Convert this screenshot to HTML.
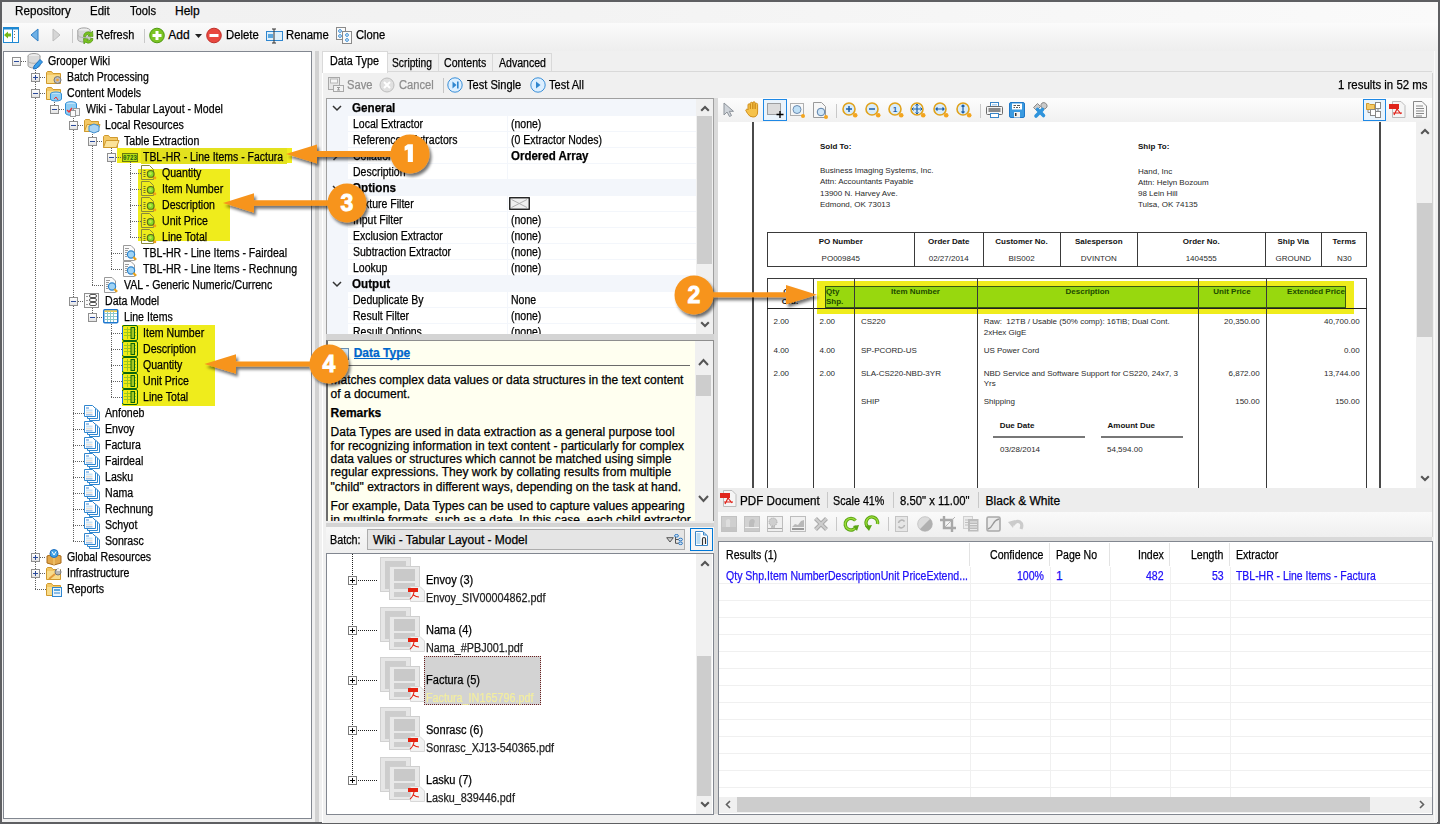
<!DOCTYPE html><html><head><meta charset="utf-8"><style>html,body{margin:0;padding:0;width:1440px;height:824px;overflow:hidden;background:#5e5f62}.a{position:absolute;margin:0;padding:0}.t{position:absolute;white-space:pre;font-family:"Liberation Sans",sans-serif;-webkit-text-stroke:0.25px currentColor}svg{overflow:visible}</style></head><body>
<svg width="0" height="0" style="position:absolute"><defs><linearGradient id="eg" x1="0" y1="0" x2="0" y2="1"><stop offset="0" stop-color="#fff"/><stop offset="1" stop-color="#e2e2e2"/></linearGradient></defs></svg>
<div class="a" style="left:0px;top:0px;width:1440px;height:824px;background:#5e5f62"></div>
<div class="a" style="left:2px;top:2px;width:1436px;height:820px;background:#f0f0f0"></div>
<div class="a" style="left:2px;top:2px;width:1436px;height:21px;background:linear-gradient(90deg,#f0f0f0 0%,#f3f3f3 40%,#fafafa 100%)"></div>
<div class="t" style="left:15.30px;top:5.00px;font-size:12px;line-height:12px;transform:scaleX(0.9728);transform-origin:0 0;color:#000;">Repository</div>
<div class="t" style="left:90.30px;top:5.00px;font-size:12px;line-height:12px;transform:scaleX(0.9527);transform-origin:0 0;color:#000;">Edit</div>
<div class="t" style="left:129.70px;top:5.00px;font-size:12px;line-height:12px;transform:scaleX(0.9317);transform-origin:0 0;color:#000;">Tools</div>
<div class="t" style="left:175.00px;top:5.00px;font-size:12px;line-height:12px;letter-spacing:-0.020px;color:#000;">Help</div>
<div class="a" style="left:2px;top:23px;width:1436px;height:28px;background:linear-gradient(180deg,#fbfbfb 0%,#f3f3f3 60%,#eeeeee 100%)"></div>
<svg class="a" style="left:3px;top:27px;" width="17" height="16" viewBox="0 0 17 16"><rect x="0.5" y="0.5" width="15" height="15" fill="#fff" stroke="#1e88d2"/><rect x="1" y="1" width="14" height="1.5" fill="#1e88d2"/><line x1="9.5" y1="1" x2="9.5" y2="15" stroke="#1e88d2"/><path d="M1 8 L5 4.5 L5 6.5 L8 6.5 L8 9.5 L5 9.5 L5 11.5Z" fill="#74b816"/><rect x="11" y="4" width="1" height="1" fill="#777"/><rect x="11" y="7" width="1" height="1" fill="#777"/><rect x="11" y="10" width="1" height="1" fill="#777"/></svg>
<svg class="a" style="left:30px;top:28px;" width="9" height="14" viewBox="0 0 9 14"><path d="M8 1 L1 7 L8 13Z" fill="#6fb1e6" stroke="#2f7ec5" stroke-width="1"/></svg>
<svg class="a" style="left:52px;top:28px;" width="9" height="14" viewBox="0 0 9 14"><path d="M1 1 L8 7 L1 13Z" fill="#d6d6d6" stroke="#bdbdbd" stroke-width="1"/></svg>
<div class="a" style="left:72px;top:29px;width:1px;height:14px;background:#c8c8c8"></div>
<svg class="a" style="left:77px;top:27px;" width="17" height="17" viewBox="0 0 17 17"><ellipse cx="7" cy="3.5" rx="6.2" ry="2.6" fill="#eeeeee" stroke="#a0a0a0"/><path d="M0.8 3.5 V12.5 A6.2 2.6 0 0 0 13.2 12.5 V3.5" fill="#d6d6d6" stroke="#a0a0a0"/><path d="M0.8 8 A6.2 2.6 0 0 0 13.2 8" fill="none" stroke="#b4b4b4"/><path d="M6.5 9.5 A4.5 4.5 0 0 1 14 6 L15.5 4 L16 9.5 L11 9 L12.5 7.5 A3 3 0 0 0 8.5 9.8Z" fill="#7ac41f" stroke="#4f9412" stroke-width="0.7"/><path d="M16 11.5 A4.5 4.5 0 0 1 8.5 15 L7 17 L6.5 11.5 L11.5 12 L10 13.5 A3 3 0 0 0 14 11.2Z" fill="#7ac41f" stroke="#4f9412" stroke-width="0.7"/></svg>
<div class="t" style="left:96.20px;top:29.00px;font-size:12px;line-height:12px;transform:scaleX(0.9091);transform-origin:0 0;color:#000;">Refresh</div>
<div class="a" style="left:144px;top:29px;width:1px;height:14px;background:#c8c8c8"></div>
<svg class="a" style="left:149px;top:27px;" width="17" height="17" viewBox="0 0 17 17"><circle cx="8" cy="8.5" r="7.3" fill="#7cc423" stroke="#4f9a12"/><path d="M6.5 4 H9.5 V7 H12.5 V10 H9.5 V13 H6.5 V10 H3.5 V7 H6.5Z" fill="#fff"/></svg>
<div class="t" style="left:168.20px;top:29.00px;font-size:12px;line-height:12px;letter-spacing:0.016px;color:#000;">Add</div>
<svg class="a" style="left:195px;top:34px;" width="7" height="4" viewBox="0 0 7 4"><path d="M0 0 H7 L3.5 4Z" fill="#222"/></svg>
<svg class="a" style="left:206px;top:27px;" width="17" height="17" viewBox="0 0 17 17"><circle cx="8" cy="8.5" r="7.3" fill="#e8483f" stroke="#c0302a"/><rect x="3.5" y="7" width="9" height="3" fill="#fff"/></svg>
<div class="t" style="left:226.20px;top:29.00px;font-size:12px;line-height:12px;transform:scaleX(0.9427);transform-origin:0 0;color:#000;">Delete</div>
<svg class="a" style="left:266px;top:28px;" width="18" height="15" viewBox="0 0 18 15"><rect x="0.5" y="3.5" width="16" height="9" fill="#dff0fb" stroke="#2f86cf"/><rect x="2" y="6" width="5" height="4" fill="#5aa7e0"/><path d="M8 1 V15 M6 1 H10 M6 15 H10" stroke="#333" stroke-width="1"/></svg>
<div class="t" style="left:286.20px;top:29.00px;font-size:12px;line-height:12px;transform:scaleX(0.9414);transform-origin:0 0;color:#000;">Rename</div>
<svg class="a" style="left:336px;top:27px;" width="17" height="17" viewBox="0 0 17 17"><rect x="0.5" y="0.5" width="9" height="12" fill="#fafafa" stroke="#8a8a8a"/><rect x="6.5" y="4.5" width="9" height="12" fill="#fafafa" stroke="#8a8a8a"/><circle cx="4" cy="4" r="1.4" fill="none" stroke="#3a8fd8"/><circle cx="4" cy="9" r="1.4" fill="none" stroke="#3a8fd8"/><circle cx="11" cy="8" r="1.4" fill="none" stroke="#3a8fd8"/><circle cx="11" cy="13" r="1.4" fill="none" stroke="#3a8fd8"/></svg>
<div class="t" style="left:356.20px;top:29.00px;font-size:12px;line-height:12px;transform:scaleX(0.9313);transform-origin:0 0;color:#000;">Clone</div>
<div class="a" style="left:3px;top:51px;width:309px;height:768px;background:#fff;border:1px solid #828790;box-sizing:border-box"></div>
<div class="a" style="left:117px;top:148px;width:175px;height:15px;background:#efec1c"></div>
<div class="a" style="left:141px;top:148px;width:146px;height:16px;background:#e3e11e"></div>
<div class="a" style="left:138px;top:169px;width:92px;height:72px;background:#efec1c"></div>
<div class="a" style="left:122px;top:325px;width:93px;height:81px;background:#efec1c"></div>
<div class="a" style="left:35px;top:66px;width:1px;height:523px;background:repeating-linear-gradient(180deg,#606060 0 1px,transparent 1px 2px)"></div>
<div class="a" style="left:54px;top:98px;width:1px;height:11px;background:repeating-linear-gradient(180deg,#606060 0 1px,transparent 1px 2px)"></div>
<div class="a" style="left:73px;top:114px;width:1px;height:427px;background:repeating-linear-gradient(180deg,#606060 0 1px,transparent 1px 2px)"></div>
<div class="a" style="left:92px;top:130px;width:1px;height:155px;background:repeating-linear-gradient(180deg,#606060 0 1px,transparent 1px 2px)"></div>
<div class="a" style="left:111px;top:146px;width:1px;height:123px;background:repeating-linear-gradient(180deg,#606060 0 1px,transparent 1px 2px)"></div>
<div class="a" style="left:130px;top:162px;width:1px;height:75px;background:repeating-linear-gradient(180deg,#606060 0 1px,transparent 1px 2px)"></div>
<div class="a" style="left:92px;top:306px;width:1px;height:11px;background:repeating-linear-gradient(180deg,#606060 0 1px,transparent 1px 2px)"></div>
<div class="a" style="left:111px;top:322px;width:1px;height:75px;background:repeating-linear-gradient(180deg,#606060 0 1px,transparent 1px 2px)"></div>
<div class="a" style="left:21px;top:61px;width:6px;height:1px;background:repeating-linear-gradient(90deg,#606060 0 1px,transparent 1px 2px)"></div>
<svg class="a" style="left:12px;top:57px;" width="9" height="9" viewBox="0 0 9 9"><rect x="0.5" y="0.5" width="8" height="8" fill="url(#eg)" stroke="#8f8f8f"/><path d="M2 4.5 H7" stroke="#2a4a9a"/></svg>
<svg class="a" style="left:27px;top:53px;" width="16" height="16" viewBox="0 0 16 16"><ellipse cx="7" cy="3" rx="6" ry="2.5" fill="#ececec" stroke="#9c9c9c"/><path d="M1 3 V12.5 A6 2.5 0 0 0 13 12.5 V3" fill="#dadada" stroke="#9c9c9c"/><path d="M1 7.8 A6 2.5 0 0 0 13 7.8" fill="none" stroke="#b0b0b0"/><path d="M7 13 L13 6.5 L15.5 9 L9.5 15.5 L6.5 16Z" fill="#3aa0ea" stroke="#1f6fc0"/></svg>
<div class="t" style="left:47.50px;top:55.00px;font-size:12px;line-height:12px;transform:scaleX(0.8855);transform-origin:0 0;color:#000;">Grooper Wiki</div>
<div class="a" style="left:40px;top:77px;width:6px;height:1px;background:repeating-linear-gradient(90deg,#606060 0 1px,transparent 1px 2px)"></div>
<svg class="a" style="left:31px;top:73px;" width="9" height="9" viewBox="0 0 9 9"><rect x="0.5" y="0.5" width="8" height="8" fill="url(#eg)" stroke="#8f8f8f"/><path d="M2 4.5 H7" stroke="#2a4a9a"/><path d="M4.5 2 V7" stroke="#2a4a9a"/></svg>
<svg class="a" style="left:46px;top:69px;" width="16" height="16" viewBox="0 0 16 16"><path d="M0.5 3.5 V14.5 H14.5 V4.5 H7 L5.5 2.5 H1.5Z" fill="#f3c865" stroke="#d09a2e"/><rect x="1" y="6" width="13" height="8" fill="#f9dc8a"/><circle cx="11.5" cy="11" r="3.5" fill="#bdbdbd" stroke="#777"/><circle cx="11.5" cy="11" r="1.3" fill="#f5a030"/></svg>
<div class="t" style="left:66.50px;top:71.00px;font-size:12px;line-height:12px;transform:scaleX(0.8752);transform-origin:0 0;color:#000;">Batch Processing</div>
<div class="a" style="left:40px;top:93px;width:6px;height:1px;background:repeating-linear-gradient(90deg,#606060 0 1px,transparent 1px 2px)"></div>
<svg class="a" style="left:31px;top:89px;" width="9" height="9" viewBox="0 0 9 9"><rect x="0.5" y="0.5" width="8" height="8" fill="url(#eg)" stroke="#8f8f8f"/><path d="M2 4.5 H7" stroke="#2a4a9a"/></svg>
<svg class="a" style="left:46px;top:85px;" width="16" height="16" viewBox="0 0 16 16"><path d="M0.5 3.5 V14.5 H14.5 V4.5 H7 L5.5 2.5 H1.5Z" fill="#f3c865" stroke="#d09a2e"/><rect x="1" y="6" width="13" height="8" fill="#f9dc8a"/><ellipse cx="10" cy="9" rx="5.5" ry="2" fill="#bfe3fa" stroke="#2f8fd8"/><path d="M4.5 9 V14 A5.5 2 0 0 0 15.5 14 V9" fill="#8fcdf3" stroke="#2f8fd8"/><path d="M8 14 L10 12 L12 15" stroke="#e33" fill="none"/></svg>
<div class="t" style="left:66.50px;top:87.00px;font-size:12px;line-height:12px;transform:scaleX(0.8820);transform-origin:0 0;color:#000;">Content Models</div>
<div class="a" style="left:59px;top:109px;width:6px;height:1px;background:repeating-linear-gradient(90deg,#606060 0 1px,transparent 1px 2px)"></div>
<svg class="a" style="left:50px;top:105px;" width="9" height="9" viewBox="0 0 9 9"><rect x="0.5" y="0.5" width="8" height="8" fill="url(#eg)" stroke="#8f8f8f"/><path d="M2 4.5 H7" stroke="#2a4a9a"/></svg>
<svg class="a" style="left:65px;top:101px;" width="16" height="16" viewBox="0 0 16 16"><ellipse cx="6" cy="3" rx="5.5" ry="2.3" fill="#bfe3fa" stroke="#2f8fd8"/><path d="M0.5 3 V12 A5.5 2.3 0 0 0 11.5 12 V3" fill="#8fcdf3" stroke="#2f8fd8"/><rect x="8.5" y="7.5" width="6" height="7" fill="#f4f4f4" stroke="#9a9a9a"/><rect x="5.5" y="9.5" width="5" height="6" fill="#fafafa" stroke="#9a9a9a"/><path d="M2 9 L4 11 L7 7" stroke="#e33" stroke-width="1.3" fill="none"/></svg>
<div class="t" style="left:85.50px;top:103.00px;font-size:12px;line-height:12px;transform:scaleX(0.8820);transform-origin:0 0;color:#000;">Wiki - Tabular Layout - Model</div>
<div class="a" style="left:78px;top:125px;width:6px;height:1px;background:repeating-linear-gradient(90deg,#606060 0 1px,transparent 1px 2px)"></div>
<svg class="a" style="left:69px;top:121px;" width="9" height="9" viewBox="0 0 9 9"><rect x="0.5" y="0.5" width="8" height="8" fill="url(#eg)" stroke="#8f8f8f"/><path d="M2 4.5 H7" stroke="#2a4a9a"/></svg>
<svg class="a" style="left:84px;top:117px;" width="16" height="16" viewBox="0 0 16 16"><path d="M0.5 3.5 V14.5 H14.5 V4.5 H7 L5.5 2.5 H1.5Z" fill="#f3c865" stroke="#d09a2e"/><path d="M0.5 14.5 L3 7.5 H16 L13.5 14.5Z" fill="#fbe29a" stroke="#d09a2e"/><path d="M10 7 L15 9 V14 L10 16 L5 14 V9Z" fill="#a9d4f4" stroke="#3f8fd0"/></svg>
<div class="t" style="left:104.50px;top:119.00px;font-size:12px;line-height:12px;transform:scaleX(0.8820);transform-origin:0 0;color:#000;">Local Resources</div>
<div class="a" style="left:97px;top:141px;width:6px;height:1px;background:repeating-linear-gradient(90deg,#606060 0 1px,transparent 1px 2px)"></div>
<svg class="a" style="left:88px;top:137px;" width="9" height="9" viewBox="0 0 9 9"><rect x="0.5" y="0.5" width="8" height="8" fill="url(#eg)" stroke="#8f8f8f"/><path d="M2 4.5 H7" stroke="#2a4a9a"/></svg>
<svg class="a" style="left:103px;top:133px;" width="16" height="16" viewBox="0 0 16 16"><path d="M0.5 3.5 V14.5 H14.5 V4.5 H7 L5.5 2.5 H1.5Z" fill="#f3c865" stroke="#d09a2e"/><path d="M0.5 14.5 L3 7.5 H16 L13.5 14.5Z" fill="#fbe29a" stroke="#d09a2e"/></svg>
<div class="t" style="left:123.50px;top:135.00px;font-size:12px;line-height:12px;transform:scaleX(0.8820);transform-origin:0 0;color:#000;">Table Extraction</div>
<div class="a" style="left:116px;top:157px;width:6px;height:1px;background:repeating-linear-gradient(90deg,#606060 0 1px,transparent 1px 2px)"></div>
<svg class="a" style="left:107px;top:153px;" width="9" height="9" viewBox="0 0 9 9"><rect x="0.5" y="0.5" width="8" height="8" fill="url(#eg)" stroke="#8f8f8f"/><path d="M2 4.5 H7" stroke="#2a4a9a"/></svg>
<svg class="a" style="left:122px;top:149px;" width="16" height="16" viewBox="0 0 16 16"><rect x="0.5" y="4.5" width="15" height="8" fill="#b6de12" stroke="#6b7a10"/><text x="8" y="11" font-size="6.5" font-family="Liberation Mono" font-weight="bold" fill="#1f5a10" text-anchor="middle" textLength="14" lengthAdjust="spacingAndGlyphs">0723</text></svg>
<div class="t" style="left:142.50px;top:151.00px;font-size:12px;line-height:12px;transform:scaleX(0.8711);transform-origin:0 0;color:#000;">TBL-HR - Line Items - Factura</div>
<div class="a" style="left:130px;top:173px;width:11px;height:1px;background:repeating-linear-gradient(90deg,#606060 0 1px,transparent 1px 2px)"></div>
<svg class="a" style="left:136px;top:165px;" width="21" height="16" viewBox="0 0 21 16"><path d="M5.5 0.5 H13.5 L17.5 4.5 V14.5 H5.5Z" fill="none" stroke="#8a8a3a"/><path d="M7.5 5.5 H9.5 M7.5 7.5 H9.5 M7.5 9.5 H9.5 M7.5 11.5 H9.5" stroke="#6b6b30"/><circle cx="14.7" cy="8.9" r="3.4" fill="#86dd2a" stroke="#5c6a12" stroke-width="1.1"/><circle cx="14.4" cy="8.6" r="1.3" fill="#c8e84a"/><circle cx="18.8" cy="12.8" r="1.5" fill="#f0a21a"/></svg>
<div class="t" style="left:161.50px;top:167.00px;font-size:12px;line-height:12px;transform:scaleX(0.8820);transform-origin:0 0;color:#000;">Quantity</div>
<div class="a" style="left:130px;top:189px;width:11px;height:1px;background:repeating-linear-gradient(90deg,#606060 0 1px,transparent 1px 2px)"></div>
<svg class="a" style="left:136px;top:181px;" width="21" height="16" viewBox="0 0 21 16"><path d="M5.5 0.5 H13.5 L17.5 4.5 V14.5 H5.5Z" fill="none" stroke="#8a8a3a"/><path d="M7.5 5.5 H9.5 M7.5 7.5 H9.5 M7.5 9.5 H9.5 M7.5 11.5 H9.5" stroke="#6b6b30"/><circle cx="14.7" cy="8.9" r="3.4" fill="#86dd2a" stroke="#5c6a12" stroke-width="1.1"/><circle cx="14.4" cy="8.6" r="1.3" fill="#c8e84a"/><circle cx="18.8" cy="12.8" r="1.5" fill="#f0a21a"/></svg>
<div class="t" style="left:161.50px;top:183.00px;font-size:12px;line-height:12px;transform:scaleX(0.8820);transform-origin:0 0;color:#000;">Item Number</div>
<div class="a" style="left:130px;top:205px;width:11px;height:1px;background:repeating-linear-gradient(90deg,#606060 0 1px,transparent 1px 2px)"></div>
<svg class="a" style="left:136px;top:197px;" width="21" height="16" viewBox="0 0 21 16"><path d="M5.5 0.5 H13.5 L17.5 4.5 V14.5 H5.5Z" fill="none" stroke="#8a8a3a"/><path d="M7.5 5.5 H9.5 M7.5 7.5 H9.5 M7.5 9.5 H9.5 M7.5 11.5 H9.5" stroke="#6b6b30"/><circle cx="14.7" cy="8.9" r="3.4" fill="#86dd2a" stroke="#5c6a12" stroke-width="1.1"/><circle cx="14.4" cy="8.6" r="1.3" fill="#c8e84a"/><circle cx="18.8" cy="12.8" r="1.5" fill="#f0a21a"/></svg>
<div class="t" style="left:161.50px;top:199.00px;font-size:12px;line-height:12px;transform:scaleX(0.8820);transform-origin:0 0;color:#000;">Description</div>
<div class="a" style="left:130px;top:221px;width:11px;height:1px;background:repeating-linear-gradient(90deg,#606060 0 1px,transparent 1px 2px)"></div>
<svg class="a" style="left:136px;top:213px;" width="21" height="16" viewBox="0 0 21 16"><path d="M5.5 0.5 H13.5 L17.5 4.5 V14.5 H5.5Z" fill="none" stroke="#8a8a3a"/><path d="M7.5 5.5 H9.5 M7.5 7.5 H9.5 M7.5 9.5 H9.5 M7.5 11.5 H9.5" stroke="#6b6b30"/><circle cx="14.7" cy="8.9" r="3.4" fill="#86dd2a" stroke="#5c6a12" stroke-width="1.1"/><circle cx="14.4" cy="8.6" r="1.3" fill="#c8e84a"/><circle cx="18.8" cy="12.8" r="1.5" fill="#f0a21a"/></svg>
<div class="t" style="left:161.50px;top:215.00px;font-size:12px;line-height:12px;transform:scaleX(0.8820);transform-origin:0 0;color:#000;">Unit Price</div>
<div class="a" style="left:130px;top:237px;width:11px;height:1px;background:repeating-linear-gradient(90deg,#606060 0 1px,transparent 1px 2px)"></div>
<svg class="a" style="left:136px;top:229px;" width="21" height="16" viewBox="0 0 21 16"><path d="M5.5 0.5 H13.5 L17.5 4.5 V14.5 H5.5Z" fill="none" stroke="#8a8a3a"/><path d="M7.5 5.5 H9.5 M7.5 7.5 H9.5 M7.5 9.5 H9.5 M7.5 11.5 H9.5" stroke="#6b6b30"/><circle cx="14.7" cy="8.9" r="3.4" fill="#86dd2a" stroke="#5c6a12" stroke-width="1.1"/><circle cx="14.4" cy="8.6" r="1.3" fill="#c8e84a"/><circle cx="18.8" cy="12.8" r="1.5" fill="#f0a21a"/></svg>
<div class="t" style="left:161.50px;top:231.00px;font-size:12px;line-height:12px;transform:scaleX(0.8820);transform-origin:0 0;color:#000;">Line Total</div>
<div class="a" style="left:111px;top:253px;width:11px;height:1px;background:repeating-linear-gradient(90deg,#606060 0 1px,transparent 1px 2px)"></div>
<svg class="a" style="left:122px;top:245px;" width="16" height="16" viewBox="0 0 16 16"><path d="M1.5 0.5 H9 L12.5 4 V15.5 H1.5Z" fill="#fbfbfb" stroke="#9a9a9a"/><path d="M3 3.5 H7 M3 5.5 H6 M3 7.5 H5 M3 9.5 H5 M3 11.5 H5" stroke="#9a9a9a"/><circle cx="9" cy="9.5" r="3.6" fill="#9fd3f5" stroke="#2f86cf" stroke-width="1.2"/><path d="M11.3 12 L14.2 14.8" stroke="#e8a21c" stroke-width="2.2"/></svg>
<div class="t" style="left:142.50px;top:247.00px;font-size:12px;line-height:12px;transform:scaleX(0.8820);transform-origin:0 0;color:#000;">TBL-HR - Line Items - Fairdeal</div>
<div class="a" style="left:111px;top:269px;width:11px;height:1px;background:repeating-linear-gradient(90deg,#606060 0 1px,transparent 1px 2px)"></div>
<svg class="a" style="left:122px;top:261px;" width="16" height="16" viewBox="0 0 16 16"><path d="M1.5 0.5 H9 L12.5 4 V15.5 H1.5Z" fill="#fbfbfb" stroke="#9a9a9a"/><path d="M3 3.5 H7 M3 5.5 H6 M3 7.5 H5 M3 9.5 H5 M3 11.5 H5" stroke="#9a9a9a"/><circle cx="9" cy="9.5" r="3.6" fill="#9fd3f5" stroke="#2f86cf" stroke-width="1.2"/><path d="M11.3 12 L14.2 14.8" stroke="#e8a21c" stroke-width="2.2"/></svg>
<div class="t" style="left:142.50px;top:263.00px;font-size:12px;line-height:12px;transform:scaleX(0.8820);transform-origin:0 0;color:#000;">TBL-HR - Line Items - Rechnung</div>
<div class="a" style="left:92px;top:285px;width:11px;height:1px;background:repeating-linear-gradient(90deg,#606060 0 1px,transparent 1px 2px)"></div>
<svg class="a" style="left:103px;top:277px;" width="16" height="16" viewBox="0 0 16 16"><path d="M1.5 0.5 H9 L12.5 4 V15.5 H1.5Z" fill="#fbfbfb" stroke="#9a9a9a"/><path d="M3 3.5 H7 M3 5.5 H6 M3 7.5 H5 M3 9.5 H5 M3 11.5 H5" stroke="#9a9a9a"/><circle cx="9" cy="9.5" r="3.6" fill="#9fd3f5" stroke="#2f86cf" stroke-width="1.2"/><path d="M11.3 12 L14.2 14.8" stroke="#e8a21c" stroke-width="2.2"/></svg>
<div class="t" style="left:123.50px;top:279.00px;font-size:12px;line-height:12px;transform:scaleX(0.8820);transform-origin:0 0;color:#000;">VAL - Generic Numeric/Currenc</div>
<div class="a" style="left:78px;top:301px;width:6px;height:1px;background:repeating-linear-gradient(90deg,#606060 0 1px,transparent 1px 2px)"></div>
<svg class="a" style="left:69px;top:297px;" width="9" height="9" viewBox="0 0 9 9"><rect x="0.5" y="0.5" width="8" height="8" fill="url(#eg)" stroke="#8f8f8f"/><path d="M2 4.5 H7" stroke="#2a4a9a"/></svg>
<svg class="a" style="left:84px;top:293px;" width="16" height="16" viewBox="0 0 16 16"><rect x="0.5" y="0.5" width="14" height="14" fill="#fafafa" stroke="#8e8e8e"/><path d="M2 3.5 H4 M2 7.5 H4 M2 11.5 H4" stroke="#9a9a9a"/><rect x="5.5" y="1.5" width="7" height="3" rx="1.5" fill="#fff" stroke="#555"/><rect x="5.5" y="5.5" width="7" height="3" rx="1.5" fill="#fff" stroke="#555"/><rect x="5.5" y="9.5" width="7" height="3" rx="1.5" fill="#fff" stroke="#555"/></svg>
<div class="t" style="left:104.50px;top:295.00px;font-size:12px;line-height:12px;transform:scaleX(0.8820);transform-origin:0 0;color:#000;">Data Model</div>
<div class="a" style="left:97px;top:317px;width:6px;height:1px;background:repeating-linear-gradient(90deg,#606060 0 1px,transparent 1px 2px)"></div>
<svg class="a" style="left:88px;top:313px;" width="9" height="9" viewBox="0 0 9 9"><rect x="0.5" y="0.5" width="8" height="8" fill="url(#eg)" stroke="#8f8f8f"/><path d="M2 4.5 H7" stroke="#2a4a9a"/></svg>
<svg class="a" style="left:103px;top:309px;" width="16" height="16" viewBox="0 0 16 16"><rect x="0.75" y="0.75" width="14" height="13" rx="1" fill="#fff" stroke="#1f78d0" stroke-width="1.5"/><rect x="1.5" y="1.5" width="12.5" height="1.3" fill="#f3c21a"/><path d="M1.5 4.5 H14 M1.5 7.5 H14 M1.5 10.5 H14 M4.5 2.5 V13 M7.5 2.5 V13 M10.5 2.5 V13" stroke="#8cc7c9"/></svg>
<div class="t" style="left:123.50px;top:311.00px;font-size:12px;line-height:12px;transform:scaleX(0.8820);transform-origin:0 0;color:#000;">Line Items</div>
<div class="a" style="left:111px;top:333px;width:11px;height:1px;background:repeating-linear-gradient(90deg,#606060 0 1px,transparent 1px 2px)"></div>
<svg class="a" style="left:122px;top:325px;" width="16" height="16" viewBox="0 0 16 16"><rect x="0.5" y="0.5" width="15" height="15" rx="1.5" fill="#f0ec14" stroke="#0b650b"/><path d="M0.5 2 V14" stroke="#1a6fd8"/><path d="M2 4.5 H14 M2 7.5 H14 M2 10.5 H14 M5.5 2 V14" stroke="#9cc81c"/><rect x="9" y="2.5" width="3.5" height="11" fill="#a9c81e" stroke="#0b650b"/></svg>
<div class="t" style="left:142.50px;top:327.00px;font-size:12px;line-height:12px;transform:scaleX(0.8820);transform-origin:0 0;color:#000;">Item Number</div>
<div class="a" style="left:111px;top:349px;width:11px;height:1px;background:repeating-linear-gradient(90deg,#606060 0 1px,transparent 1px 2px)"></div>
<svg class="a" style="left:122px;top:341px;" width="16" height="16" viewBox="0 0 16 16"><rect x="0.5" y="0.5" width="15" height="15" rx="1.5" fill="#f0ec14" stroke="#0b650b"/><path d="M0.5 2 V14" stroke="#1a6fd8"/><path d="M2 4.5 H14 M2 7.5 H14 M2 10.5 H14 M5.5 2 V14" stroke="#9cc81c"/><rect x="9" y="2.5" width="3.5" height="11" fill="#a9c81e" stroke="#0b650b"/></svg>
<div class="t" style="left:142.50px;top:343.00px;font-size:12px;line-height:12px;transform:scaleX(0.8820);transform-origin:0 0;color:#000;">Description</div>
<div class="a" style="left:111px;top:365px;width:11px;height:1px;background:repeating-linear-gradient(90deg,#606060 0 1px,transparent 1px 2px)"></div>
<svg class="a" style="left:122px;top:357px;" width="16" height="16" viewBox="0 0 16 16"><rect x="0.5" y="0.5" width="15" height="15" rx="1.5" fill="#f0ec14" stroke="#0b650b"/><path d="M0.5 2 V14" stroke="#1a6fd8"/><path d="M2 4.5 H14 M2 7.5 H14 M2 10.5 H14 M5.5 2 V14" stroke="#9cc81c"/><rect x="9" y="2.5" width="3.5" height="11" fill="#a9c81e" stroke="#0b650b"/></svg>
<div class="t" style="left:142.50px;top:359.00px;font-size:12px;line-height:12px;transform:scaleX(0.8820);transform-origin:0 0;color:#000;">Quantity</div>
<div class="a" style="left:111px;top:381px;width:11px;height:1px;background:repeating-linear-gradient(90deg,#606060 0 1px,transparent 1px 2px)"></div>
<svg class="a" style="left:122px;top:373px;" width="16" height="16" viewBox="0 0 16 16"><rect x="0.5" y="0.5" width="15" height="15" rx="1.5" fill="#f0ec14" stroke="#0b650b"/><path d="M0.5 2 V14" stroke="#1a6fd8"/><path d="M2 4.5 H14 M2 7.5 H14 M2 10.5 H14 M5.5 2 V14" stroke="#9cc81c"/><rect x="9" y="2.5" width="3.5" height="11" fill="#a9c81e" stroke="#0b650b"/></svg>
<div class="t" style="left:142.50px;top:375.00px;font-size:12px;line-height:12px;transform:scaleX(0.8820);transform-origin:0 0;color:#000;">Unit Price</div>
<div class="a" style="left:111px;top:397px;width:11px;height:1px;background:repeating-linear-gradient(90deg,#606060 0 1px,transparent 1px 2px)"></div>
<svg class="a" style="left:122px;top:389px;" width="16" height="16" viewBox="0 0 16 16"><rect x="0.5" y="0.5" width="15" height="15" rx="1.5" fill="#f0ec14" stroke="#0b650b"/><path d="M0.5 2 V14" stroke="#1a6fd8"/><path d="M2 4.5 H14 M2 7.5 H14 M2 10.5 H14 M5.5 2 V14" stroke="#9cc81c"/><rect x="9" y="2.5" width="3.5" height="11" fill="#a9c81e" stroke="#0b650b"/></svg>
<div class="t" style="left:142.50px;top:391.00px;font-size:12px;line-height:12px;transform:scaleX(0.8820);transform-origin:0 0;color:#000;">Line Total</div>
<div class="a" style="left:73px;top:413px;width:11px;height:1px;background:repeating-linear-gradient(90deg,#606060 0 1px,transparent 1px 2px)"></div>
<svg class="a" style="left:84px;top:405px;" width="16" height="16" viewBox="0 0 16 16"><path d="M5.5 4.5 H13 L15.5 7 V15.5 H5.5Z" fill="#fff" stroke="#2f86cf"/><path d="M3.5 2.5 H11 L13.5 5 V13.5 H3.5Z" fill="#fff" stroke="#2f86cf"/><path d="M0.5 0.5 H8.5 L11.5 3.5 V11.5 H0.5Z" fill="#fff" stroke="#2f86cf"/><rect x="2" y="2" width="3" height="2" fill="#9fc3ea"/><rect x="2" y="4.5" width="6.5" height="2" fill="#c7e3f7"/><rect x="2" y="7" width="6.5" height="1.5" fill="#e6e0d8"/><rect x="2" y="9" width="6.5" height="1.5" fill="#9fc3ea"/></svg>
<div class="t" style="left:104.50px;top:407.00px;font-size:12px;line-height:12px;transform:scaleX(0.8820);transform-origin:0 0;color:#000;">Anfoneb</div>
<div class="a" style="left:73px;top:429px;width:11px;height:1px;background:repeating-linear-gradient(90deg,#606060 0 1px,transparent 1px 2px)"></div>
<svg class="a" style="left:84px;top:421px;" width="16" height="16" viewBox="0 0 16 16"><path d="M5.5 4.5 H13 L15.5 7 V15.5 H5.5Z" fill="#fff" stroke="#2f86cf"/><path d="M3.5 2.5 H11 L13.5 5 V13.5 H3.5Z" fill="#fff" stroke="#2f86cf"/><path d="M0.5 0.5 H8.5 L11.5 3.5 V11.5 H0.5Z" fill="#fff" stroke="#2f86cf"/><rect x="2" y="2" width="3" height="2" fill="#9fc3ea"/><rect x="2" y="4.5" width="6.5" height="2" fill="#c7e3f7"/><rect x="2" y="7" width="6.5" height="1.5" fill="#e6e0d8"/><rect x="2" y="9" width="6.5" height="1.5" fill="#9fc3ea"/></svg>
<div class="t" style="left:104.50px;top:423.00px;font-size:12px;line-height:12px;transform:scaleX(0.8820);transform-origin:0 0;color:#000;">Envoy</div>
<div class="a" style="left:73px;top:445px;width:11px;height:1px;background:repeating-linear-gradient(90deg,#606060 0 1px,transparent 1px 2px)"></div>
<svg class="a" style="left:84px;top:437px;" width="16" height="16" viewBox="0 0 16 16"><path d="M5.5 4.5 H13 L15.5 7 V15.5 H5.5Z" fill="#fff" stroke="#2f86cf"/><path d="M3.5 2.5 H11 L13.5 5 V13.5 H3.5Z" fill="#fff" stroke="#2f86cf"/><path d="M0.5 0.5 H8.5 L11.5 3.5 V11.5 H0.5Z" fill="#fff" stroke="#2f86cf"/><rect x="2" y="2" width="3" height="2" fill="#9fc3ea"/><rect x="2" y="4.5" width="6.5" height="2" fill="#c7e3f7"/><rect x="2" y="7" width="6.5" height="1.5" fill="#e6e0d8"/><rect x="2" y="9" width="6.5" height="1.5" fill="#9fc3ea"/></svg>
<div class="t" style="left:104.50px;top:439.00px;font-size:12px;line-height:12px;transform:scaleX(0.8820);transform-origin:0 0;color:#000;">Factura</div>
<div class="a" style="left:73px;top:461px;width:11px;height:1px;background:repeating-linear-gradient(90deg,#606060 0 1px,transparent 1px 2px)"></div>
<svg class="a" style="left:84px;top:453px;" width="16" height="16" viewBox="0 0 16 16"><path d="M5.5 4.5 H13 L15.5 7 V15.5 H5.5Z" fill="#fff" stroke="#2f86cf"/><path d="M3.5 2.5 H11 L13.5 5 V13.5 H3.5Z" fill="#fff" stroke="#2f86cf"/><path d="M0.5 0.5 H8.5 L11.5 3.5 V11.5 H0.5Z" fill="#fff" stroke="#2f86cf"/><rect x="2" y="2" width="3" height="2" fill="#9fc3ea"/><rect x="2" y="4.5" width="6.5" height="2" fill="#c7e3f7"/><rect x="2" y="7" width="6.5" height="1.5" fill="#e6e0d8"/><rect x="2" y="9" width="6.5" height="1.5" fill="#9fc3ea"/></svg>
<div class="t" style="left:104.50px;top:455.00px;font-size:12px;line-height:12px;transform:scaleX(0.8820);transform-origin:0 0;color:#000;">Fairdeal</div>
<div class="a" style="left:73px;top:477px;width:11px;height:1px;background:repeating-linear-gradient(90deg,#606060 0 1px,transparent 1px 2px)"></div>
<svg class="a" style="left:84px;top:469px;" width="16" height="16" viewBox="0 0 16 16"><path d="M5.5 4.5 H13 L15.5 7 V15.5 H5.5Z" fill="#fff" stroke="#2f86cf"/><path d="M3.5 2.5 H11 L13.5 5 V13.5 H3.5Z" fill="#fff" stroke="#2f86cf"/><path d="M0.5 0.5 H8.5 L11.5 3.5 V11.5 H0.5Z" fill="#fff" stroke="#2f86cf"/><rect x="2" y="2" width="3" height="2" fill="#9fc3ea"/><rect x="2" y="4.5" width="6.5" height="2" fill="#c7e3f7"/><rect x="2" y="7" width="6.5" height="1.5" fill="#e6e0d8"/><rect x="2" y="9" width="6.5" height="1.5" fill="#9fc3ea"/></svg>
<div class="t" style="left:104.50px;top:471.00px;font-size:12px;line-height:12px;transform:scaleX(0.8820);transform-origin:0 0;color:#000;">Lasku</div>
<div class="a" style="left:73px;top:493px;width:11px;height:1px;background:repeating-linear-gradient(90deg,#606060 0 1px,transparent 1px 2px)"></div>
<svg class="a" style="left:84px;top:485px;" width="16" height="16" viewBox="0 0 16 16"><path d="M5.5 4.5 H13 L15.5 7 V15.5 H5.5Z" fill="#fff" stroke="#2f86cf"/><path d="M3.5 2.5 H11 L13.5 5 V13.5 H3.5Z" fill="#fff" stroke="#2f86cf"/><path d="M0.5 0.5 H8.5 L11.5 3.5 V11.5 H0.5Z" fill="#fff" stroke="#2f86cf"/><rect x="2" y="2" width="3" height="2" fill="#9fc3ea"/><rect x="2" y="4.5" width="6.5" height="2" fill="#c7e3f7"/><rect x="2" y="7" width="6.5" height="1.5" fill="#e6e0d8"/><rect x="2" y="9" width="6.5" height="1.5" fill="#9fc3ea"/></svg>
<div class="t" style="left:104.50px;top:487.00px;font-size:12px;line-height:12px;transform:scaleX(0.8820);transform-origin:0 0;color:#000;">Nama</div>
<div class="a" style="left:73px;top:509px;width:11px;height:1px;background:repeating-linear-gradient(90deg,#606060 0 1px,transparent 1px 2px)"></div>
<svg class="a" style="left:84px;top:501px;" width="16" height="16" viewBox="0 0 16 16"><path d="M5.5 4.5 H13 L15.5 7 V15.5 H5.5Z" fill="#fff" stroke="#2f86cf"/><path d="M3.5 2.5 H11 L13.5 5 V13.5 H3.5Z" fill="#fff" stroke="#2f86cf"/><path d="M0.5 0.5 H8.5 L11.5 3.5 V11.5 H0.5Z" fill="#fff" stroke="#2f86cf"/><rect x="2" y="2" width="3" height="2" fill="#9fc3ea"/><rect x="2" y="4.5" width="6.5" height="2" fill="#c7e3f7"/><rect x="2" y="7" width="6.5" height="1.5" fill="#e6e0d8"/><rect x="2" y="9" width="6.5" height="1.5" fill="#9fc3ea"/></svg>
<div class="t" style="left:104.50px;top:503.00px;font-size:12px;line-height:12px;transform:scaleX(0.8820);transform-origin:0 0;color:#000;">Rechnung</div>
<div class="a" style="left:73px;top:525px;width:11px;height:1px;background:repeating-linear-gradient(90deg,#606060 0 1px,transparent 1px 2px)"></div>
<svg class="a" style="left:84px;top:517px;" width="16" height="16" viewBox="0 0 16 16"><path d="M5.5 4.5 H13 L15.5 7 V15.5 H5.5Z" fill="#fff" stroke="#2f86cf"/><path d="M3.5 2.5 H11 L13.5 5 V13.5 H3.5Z" fill="#fff" stroke="#2f86cf"/><path d="M0.5 0.5 H8.5 L11.5 3.5 V11.5 H0.5Z" fill="#fff" stroke="#2f86cf"/><rect x="2" y="2" width="3" height="2" fill="#9fc3ea"/><rect x="2" y="4.5" width="6.5" height="2" fill="#c7e3f7"/><rect x="2" y="7" width="6.5" height="1.5" fill="#e6e0d8"/><rect x="2" y="9" width="6.5" height="1.5" fill="#9fc3ea"/></svg>
<div class="t" style="left:104.50px;top:519.00px;font-size:12px;line-height:12px;transform:scaleX(0.8820);transform-origin:0 0;color:#000;">Schyot</div>
<div class="a" style="left:73px;top:541px;width:11px;height:1px;background:repeating-linear-gradient(90deg,#606060 0 1px,transparent 1px 2px)"></div>
<svg class="a" style="left:84px;top:533px;" width="16" height="16" viewBox="0 0 16 16"><path d="M5.5 4.5 H13 L15.5 7 V15.5 H5.5Z" fill="#fff" stroke="#2f86cf"/><path d="M3.5 2.5 H11 L13.5 5 V13.5 H3.5Z" fill="#fff" stroke="#2f86cf"/><path d="M0.5 0.5 H8.5 L11.5 3.5 V11.5 H0.5Z" fill="#fff" stroke="#2f86cf"/><rect x="2" y="2" width="3" height="2" fill="#9fc3ea"/><rect x="2" y="4.5" width="6.5" height="2" fill="#c7e3f7"/><rect x="2" y="7" width="6.5" height="1.5" fill="#e6e0d8"/><rect x="2" y="9" width="6.5" height="1.5" fill="#9fc3ea"/></svg>
<div class="t" style="left:104.50px;top:535.00px;font-size:12px;line-height:12px;transform:scaleX(0.8820);transform-origin:0 0;color:#000;">Sonrasc</div>
<div class="a" style="left:40px;top:557px;width:6px;height:1px;background:repeating-linear-gradient(90deg,#606060 0 1px,transparent 1px 2px)"></div>
<svg class="a" style="left:31px;top:553px;" width="9" height="9" viewBox="0 0 9 9"><rect x="0.5" y="0.5" width="8" height="8" fill="url(#eg)" stroke="#8f8f8f"/><path d="M2 4.5 H7" stroke="#2a4a9a"/><path d="M4.5 2 V7" stroke="#2a4a9a"/></svg>
<svg class="a" style="left:46px;top:549px;" width="16" height="16" viewBox="0 0 16 16"><path d="M1 7 L8 5 L15 7 V14 L8 16 L1 14Z" fill="#e2a74a" stroke="#a86a1a"/><path d="M8 8 V16" stroke="#f6d27a"/><circle cx="8" cy="4.5" r="4" fill="#42a4e8" stroke="#1f6fc0"/><path d="M6 2.5 L8 6 L10 2.5" stroke="#fff" stroke-width="1" fill="none"/></svg>
<div class="t" style="left:66.50px;top:551.00px;font-size:12px;line-height:12px;transform:scaleX(0.8820);transform-origin:0 0;color:#000;">Global Resources</div>
<div class="a" style="left:40px;top:573px;width:6px;height:1px;background:repeating-linear-gradient(90deg,#606060 0 1px,transparent 1px 2px)"></div>
<svg class="a" style="left:31px;top:569px;" width="9" height="9" viewBox="0 0 9 9"><rect x="0.5" y="0.5" width="8" height="8" fill="url(#eg)" stroke="#8f8f8f"/><path d="M2 4.5 H7" stroke="#2a4a9a"/><path d="M4.5 2 V7" stroke="#2a4a9a"/></svg>
<svg class="a" style="left:46px;top:565px;" width="16" height="16" viewBox="0 0 16 16"><path d="M0.5 3.5 V14.5 H14.5 V4.5 H7 L5.5 2.5 H1.5Z" fill="#f3c865" stroke="#d09a2e"/><rect x="1" y="6" width="13" height="8" fill="#f9dc8a"/><circle cx="12" cy="7" r="3" fill="#b8b8b8" stroke="#777"/><rect x="11" y="4" width="3" height="2" fill="#f0f0f0"/><path d="M3 14 L9 9" stroke="#e39a3a" stroke-width="2"/></svg>
<div class="t" style="left:66.50px;top:567.00px;font-size:12px;line-height:12px;transform:scaleX(0.8820);transform-origin:0 0;color:#000;">Infrastructure</div>
<div class="a" style="left:35px;top:589px;width:11px;height:1px;background:repeating-linear-gradient(90deg,#606060 0 1px,transparent 1px 2px)"></div>
<svg class="a" style="left:46px;top:581px;" width="16" height="16" viewBox="0 0 16 16"><path d="M0.5 3.5 V14.5 H14.5 V4.5 H7 L5.5 2.5 H1.5Z" fill="#f3c865" stroke="#d09a2e"/><rect x="1" y="6" width="13" height="8" fill="#f9dc8a"/><rect x="6.5" y="6.5" width="9" height="9" fill="#eaf5fd" stroke="#2f86cf"/><rect x="8" y="8" width="6" height="2" fill="#5aa7e0"/><path d="M8 12 H14" stroke="#2f86cf"/></svg>
<div class="t" style="left:66.50px;top:583.00px;font-size:12px;line-height:12px;transform:scaleX(0.8820);transform-origin:0 0;color:#000;">Reports</div>
<div class="a" style="left:315px;top:51px;width:4px;height:771px;background:#d2d2d2"></div>
<div class="a" style="left:322px;top:71px;width:1114px;height:751px;background:#f0f0f0;border-top:1px solid #d9d9d9;border-left:1px solid #fff"></div>
<div class="a" style="left:387px;top:53px;width:52px;height:18px;background:#f0f0f0;border:1px solid #d9d9d9;border-bottom:none;box-sizing:border-box"></div>
<div class="a" style="left:438px;top:53px;width:55px;height:18px;background:#f0f0f0;border:1px solid #d9d9d9;border-bottom:none;box-sizing:border-box"></div>
<div class="a" style="left:492px;top:53px;width:60px;height:18px;background:#f0f0f0;border:1px solid #d9d9d9;border-bottom:none;box-sizing:border-box"></div>
<div class="a" style="left:322px;top:51px;width:66px;height:22px;background:#fff;border:1px solid #d9d9d9;border-bottom:none;box-sizing:border-box"></div>
<div class="t" style="left:330.30px;top:55.00px;font-size:12px;line-height:12px;transform:scaleX(0.8975);transform-origin:0 0;color:#000;">Data Type</div>
<div class="t" style="left:392.30px;top:57.00px;font-size:12px;line-height:12px;transform:scaleX(0.8546);transform-origin:0 0;color:#000;">Scripting</div>
<div class="t" style="left:444.30px;top:57.00px;font-size:12px;line-height:12px;transform:scaleX(0.8800);transform-origin:0 0;color:#000;">Contents</div>
<div class="t" style="left:499.00px;top:57.00px;font-size:12px;line-height:12px;transform:scaleX(0.8800);transform-origin:0 0;color:#000;">Advanced</div>
<div class="a" style="left:326px;top:73px;width:1110px;height:25px;background:#f0f0f0"></div>
<svg class="a" style="left:328px;top:77px;" width="16" height="16" viewBox="0 0 16 16"><rect x="0.5" y="0.5" width="11" height="12" fill="#e6e6e6" stroke="#a8a8a8"/><rect x="2.5" y="2" width="7" height="4" fill="#f6f6f6" stroke="#b8b8b8"/><rect x="5.5" y="8.5" width="10" height="6" fill="#f2f2f2" stroke="#a8a8a8"/><path d="M9 10.5 H12 M10.5 10.5 V13 M9 13 H12" stroke="#999"/></svg>
<div class="t" style="left:347.00px;top:79.00px;font-size:12px;line-height:12px;transform:scaleX(0.9300);transform-origin:0 0;color:#8d8d8d;">Save</div>
<svg class="a" style="left:379px;top:77px;" width="16" height="16" viewBox="0 0 16 16"><circle cx="8" cy="8" r="7" fill="#e0e0e0" stroke="#bdbdbd"/><path d="M5 5 L11 11 M11 5 L5 11" stroke="#fff" stroke-width="2"/></svg>
<div class="t" style="left:398.70px;top:79.00px;font-size:12px;line-height:12px;transform:scaleX(0.9300);transform-origin:0 0;color:#8d8d8d;">Cancel</div>
<div class="a" style="left:443px;top:78px;width:1px;height:15px;background:#c4c4c4"></div>
<svg class="a" style="left:447px;top:77px;" width="17" height="17" viewBox="0 0 17 17"><circle cx="8" cy="8" r="7.2" fill="#dcefff" stroke="#3a8fd8"/><path d="M5.5 4.5 L9.5 8 L5.5 11.5Z" fill="#2f86cf"/><rect x="10" y="4.5" width="1.6" height="7" fill="#2f86cf"/></svg>
<div class="t" style="left:467.40px;top:79.00px;font-size:12px;line-height:12px;transform:scaleX(0.9233);transform-origin:0 0;color:#000;">Test Single</div>
<svg class="a" style="left:530px;top:77px;" width="17" height="17" viewBox="0 0 17 17"><circle cx="8" cy="8" r="7.2" fill="#dcefff" stroke="#3a8fd8"/><path d="M6 4.5 L10.5 8 L6 11.5Z" fill="#2f86cf"/></svg>
<div class="t" style="left:549.40px;top:79.00px;font-size:12px;line-height:12px;transform:scaleX(0.9200);transform-origin:0 0;color:#000;">Test All</div>
<div class="t" style="left:1338.00px;top:79.00px;font-size:12px;line-height:12px;transform:scaleX(0.9517);transform-origin:0 0;color:#000;">1 results in 52 ms</div>
<div class="a" style="left:326px;top:98px;width:388px;height:237px;background:#f3f6fb;border:1px solid #a0a0a0;box-sizing:border-box;overflow:hidden"></div>
<svg class="a" style="left:332px;top:105px;" width="10" height="6" viewBox="0 0 10 6"><path d="M1 1 L5 5 L9 1" stroke="#333" stroke-width="1.5" fill="none"/></svg>
<div class="t" style="left:351.80px;top:102.00px;font-size:12px;line-height:12px;font-weight:bold;transform:scaleX(0.9700);transform-origin:0 0;color:#000;">General</div>
<div class="a" style="left:348px;top:116px;width:159px;height:15px;background:#fff"></div>
<div class="a" style="left:508px;top:116px;width:189px;height:15px;background:#fff"></div>
<div class="t" style="left:352.50px;top:118.00px;font-size:12px;line-height:12px;transform:scaleX(0.8750);transform-origin:0 0;color:#000;">Local Extractor</div>
<div class="t" style="left:510.90px;top:118.00px;font-size:12px;line-height:12px;transform:scaleX(0.8750);transform-origin:0 0;color:#000;">(none)</div>
<div class="a" style="left:348px;top:132px;width:159px;height:15px;background:#fff"></div>
<div class="a" style="left:508px;top:132px;width:189px;height:15px;background:#fff"></div>
<div class="t" style="left:352.50px;top:134.00px;font-size:12px;line-height:12px;transform:scaleX(0.8750);transform-origin:0 0;color:#000;">Referenced Extractors</div>
<div class="t" style="left:510.90px;top:134.00px;font-size:12px;line-height:12px;transform:scaleX(0.8750);transform-origin:0 0;color:#000;">(0 Extractor Nodes)</div>
<div class="a" style="left:348px;top:148px;width:159px;height:15px;background:#fff"></div>
<div class="a" style="left:508px;top:148px;width:189px;height:15px;background:#fff"></div>
<div class="t" style="left:352.50px;top:150.00px;font-size:12px;line-height:12px;transform:scaleX(0.8750);transform-origin:0 0;color:#000;">Collation</div>
<svg class="a" style="left:332px;top:151px;" width="8" height="10" viewBox="0 0 8 10"><path d="M1.5 1 L5.5 5 L1.5 9" stroke="#444" stroke-width="1.5" fill="none"/></svg>
<div class="t" style="left:510.90px;top:150.00px;font-size:12px;line-height:12px;font-weight:bold;transform:scaleX(0.9577);transform-origin:0 0;color:#000;">Ordered Array</div>
<div class="a" style="left:348px;top:164px;width:159px;height:15px;background:#fff"></div>
<div class="a" style="left:508px;top:164px;width:189px;height:15px;background:#fff"></div>
<div class="t" style="left:352.50px;top:166.00px;font-size:12px;line-height:12px;transform:scaleX(0.8750);transform-origin:0 0;color:#000;">Description</div>
<svg class="a" style="left:332px;top:185px;" width="10" height="6" viewBox="0 0 10 6"><path d="M1 1 L5 5 L9 1" stroke="#333" stroke-width="1.5" fill="none"/></svg>
<div class="t" style="left:351.80px;top:182.00px;font-size:12px;line-height:12px;font-weight:bold;transform:scaleX(0.9700);transform-origin:0 0;color:#000;">Options</div>
<div class="a" style="left:348px;top:196px;width:159px;height:15px;background:#fff"></div>
<div class="a" style="left:508px;top:196px;width:189px;height:15px;background:#fff"></div>
<div class="t" style="left:352.50px;top:198.00px;font-size:12px;line-height:12px;transform:scaleX(0.8750);transform-origin:0 0;color:#000;">Texture Filter</div>
<svg class="a" style="left:509px;top:197px;" width="21" height="13" viewBox="0 0 21 13"><rect x="0.75" y="0.75" width="19.5" height="11.5" fill="#efefef" stroke="#111" stroke-width="1.3"/><path d="M2.5 2.5 L18 10.5 M18 2.5 L2.5 10.5" stroke="#b0b0b0"/></svg>
<div class="a" style="left:348px;top:212px;width:159px;height:15px;background:#fff"></div>
<div class="a" style="left:508px;top:212px;width:189px;height:15px;background:#fff"></div>
<div class="t" style="left:352.50px;top:214.00px;font-size:12px;line-height:12px;transform:scaleX(0.8750);transform-origin:0 0;color:#000;">Input Filter</div>
<div class="t" style="left:510.90px;top:214.00px;font-size:12px;line-height:12px;transform:scaleX(0.8750);transform-origin:0 0;color:#000;">(none)</div>
<div class="a" style="left:348px;top:228px;width:159px;height:15px;background:#fff"></div>
<div class="a" style="left:508px;top:228px;width:189px;height:15px;background:#fff"></div>
<div class="t" style="left:352.50px;top:230.00px;font-size:12px;line-height:12px;transform:scaleX(0.8750);transform-origin:0 0;color:#000;">Exclusion Extractor</div>
<div class="t" style="left:510.90px;top:230.00px;font-size:12px;line-height:12px;transform:scaleX(0.8750);transform-origin:0 0;color:#000;">(none)</div>
<div class="a" style="left:348px;top:244px;width:159px;height:15px;background:#fff"></div>
<div class="a" style="left:508px;top:244px;width:189px;height:15px;background:#fff"></div>
<div class="t" style="left:352.50px;top:246.00px;font-size:12px;line-height:12px;transform:scaleX(0.8750);transform-origin:0 0;color:#000;">Subtraction Extractor</div>
<div class="t" style="left:510.90px;top:246.00px;font-size:12px;line-height:12px;transform:scaleX(0.8750);transform-origin:0 0;color:#000;">(none)</div>
<div class="a" style="left:348px;top:260px;width:159px;height:15px;background:#fff"></div>
<div class="a" style="left:508px;top:260px;width:189px;height:15px;background:#fff"></div>
<div class="t" style="left:352.50px;top:262.00px;font-size:12px;line-height:12px;transform:scaleX(0.8750);transform-origin:0 0;color:#000;">Lookup</div>
<div class="t" style="left:510.90px;top:262.00px;font-size:12px;line-height:12px;transform:scaleX(0.8750);transform-origin:0 0;color:#000;">(none)</div>
<svg class="a" style="left:332px;top:281px;" width="10" height="6" viewBox="0 0 10 6"><path d="M1 1 L5 5 L9 1" stroke="#333" stroke-width="1.5" fill="none"/></svg>
<div class="t" style="left:351.80px;top:278.00px;font-size:12px;line-height:12px;font-weight:bold;transform:scaleX(0.9700);transform-origin:0 0;color:#000;">Output</div>
<div class="a" style="left:348px;top:292px;width:159px;height:15px;background:#fff"></div>
<div class="a" style="left:508px;top:292px;width:189px;height:15px;background:#fff"></div>
<div class="t" style="left:352.50px;top:294.00px;font-size:12px;line-height:12px;transform:scaleX(0.8750);transform-origin:0 0;color:#000;">Deduplicate By</div>
<div class="t" style="left:510.90px;top:294.00px;font-size:12px;line-height:12px;transform:scaleX(0.8750);transform-origin:0 0;color:#000;">None</div>
<div class="a" style="left:348px;top:308px;width:159px;height:15px;background:#fff"></div>
<div class="a" style="left:508px;top:308px;width:189px;height:15px;background:#fff"></div>
<div class="t" style="left:352.50px;top:310.00px;font-size:12px;line-height:12px;transform:scaleX(0.8750);transform-origin:0 0;color:#000;">Result Filter</div>
<div class="t" style="left:510.90px;top:310.00px;font-size:12px;line-height:12px;transform:scaleX(0.8750);transform-origin:0 0;color:#000;">(none)</div>
<div class="a" style="left:348px;top:324px;width:159px;height:10px;background:#fff"></div>
<div class="a" style="left:508px;top:324px;width:189px;height:10px;background:#fff"></div>
<div class="t" style="left:352.50px;top:326.00px;font-size:12px;line-height:12px;transform:scaleX(0.8750);transform-origin:0 0;color:#000;">Result Options</div>
<div class="t" style="left:510.90px;top:326.00px;font-size:12px;line-height:12px;transform:scaleX(0.8750);transform-origin:0 0;color:#000;">(none)</div>
<div class="a" style="left:326px;top:334px;width:388px;height:1px;background:#a0a0a0"></div>
<div class="a" style="left:696px;top:99px;width:17px;height:235px;background:#f0f0f0"></div>
<div class="a" style="left:697px;top:116px;width:15px;height:148px;background:#cdcdcd"></div>
<svg class="a" style="left:699.5px;top:105px;" width="10" height="7" viewBox="0 0 10 7"><path d="M1.2 5.8 L5 2 L8.8 5.8" stroke="#555" stroke-width="2.1" fill="none"/></svg>
<svg class="a" style="left:699.5px;top:321px;" width="10" height="7" viewBox="0 0 10 7"><path d="M1.2 1.2 L5 5 L8.8 1.2" stroke="#555" stroke-width="2.1" fill="none"/></svg>
<div class="a" style="left:326px;top:334px;width:388px;height:6px;background:#d4d4d4"></div>
<div class="a" style="left:326px;top:340px;width:388px;height:181px;background:#fffff0;border-top:1px solid #8e8e8e;border-left:2px solid #6d6d6d;border-right:1px solid #8e8e8e;box-sizing:border-box;overflow:hidden"></div>
<div class="a" style="left:326px;top:521px;width:388px;height:2px;background:#ececec"></div>
<div class="a" style="left:326px;top:523px;width:388px;height:4px;background:#d4d4d4"></div>
<div class="a" style="left:327px;top:341px;width:368px;height:180px;overflow:hidden">
<svg class="a" style="left:8px;top:7px;" width="14" height="12" viewBox="0 0 14 12"><rect x="0.5" y="0.5" width="13" height="11" fill="#cfe6f8" stroke="#6a8fb0"/></svg>
<div class="t" style="left:26.70px;top:6.00px;font-size:12px;line-height:12px;font-weight:bold;color:#0066cc;">Data Type</div>
<div class="a" style="left:26.69999999999999px;top:17px;width:56.6px;height:1px;background:#0066cc"></div>
<div class="a" style="left:5px;top:24px;width:358px;height:1px;background:#6a6a6a"></div>
<div class="t" style="left:3.60px;top:33.00px;font-size:12px;line-height:12px;color:#000;">Matches complex data values or data structures in the text content</div>
<div class="t" style="left:3.60px;top:47.00px;font-size:12px;line-height:12px;color:#000;">of a document.</div>
<div class="t" style="left:3.60px;top:66.00px;font-size:12px;line-height:12px;font-weight:bold;color:#000;">Remarks</div>
<div class="t" style="left:3.60px;top:85.00px;font-size:12px;line-height:12px;color:#000;">Data Types are used in data extraction as a general purpose tool</div>
<div class="t" style="left:3.60px;top:99.00px;font-size:12px;line-height:12px;color:#000;">for recognizing information in text content - particularly for complex</div>
<div class="t" style="left:3.60px;top:112.00px;font-size:12px;line-height:12px;color:#000;">data values or structures which cannot be matched using simple</div>
<div class="t" style="left:3.60px;top:125.00px;font-size:12px;line-height:12px;color:#000;">regular expressions. They work by collating results from multiple</div>
<div class="t" style="left:3.60px;top:140.00px;font-size:12px;line-height:12px;color:#000;">&quot;child&quot; extractors in different ways, depending on the task at hand.</div>
<div class="t" style="left:3.60px;top:159.00px;font-size:12px;line-height:12px;color:#000;">For example, Data Types can be used to capture values appearing</div>
<div class="t" style="left:3.60px;top:173.00px;font-size:12px;line-height:12px;color:#000;">in multiple formats, such as a date. In this case, each child extractor</div>
</div>
<div class="a" style="left:695px;top:341px;width:18px;height:180px;background:#f0f0f0"></div>
<div class="a" style="left:696px;top:375px;width:15px;height:21px;background:#cdcdcd"></div>
<svg class="a" style="left:698px;top:358px;" width="11" height="8" viewBox="0 0 11 8"><path d="M1 7 L5.5 2 L10 7" stroke="#555" stroke-width="2" fill="none"/></svg>
<svg class="a" style="left:698px;top:495px;" width="11" height="8" viewBox="0 0 11 8"><path d="M1 1 L5.5 6 L10 1" stroke="#555" stroke-width="2" fill="none"/></svg>
<div class="a" style="left:326px;top:527px;width:388px;height:26px;background:linear-gradient(180deg,#f7f7f7,#efefef)"></div>
<div class="t" style="left:329.50px;top:534.00px;font-size:12px;line-height:12px;transform:scaleX(0.8995);transform-origin:0 0;color:#000;">Batch:</div>
<div class="a" style="left:367px;top:529px;width:318px;height:21px;background:#e5e5e5;border:1px solid #adadad;box-sizing:border-box"></div>
<div class="t" style="left:372.90px;top:534.00px;font-size:12px;line-height:12px;letter-spacing:-0.025px;color:#000;">Wiki - Tabular Layout - Model</div>
<svg class="a" style="left:666px;top:537px;" width="8" height="6" viewBox="0 0 8 6"><path d="M0.7 0.7 H7.3 L4 5Z" fill="#d0d0d0" stroke="#555" stroke-width="1"/></svg>
<svg class="a" style="left:674px;top:534px;" width="9" height="11" viewBox="0 0 9 11"><ellipse cx="2.5" cy="1.8" rx="2" ry="1.3" fill="#cfe4f7" stroke="#2f78c0"/><ellipse cx="6.5" cy="5.5" rx="2" ry="1.3" fill="#cfe4f7" stroke="#2f78c0"/><ellipse cx="6.5" cy="9.3" rx="2" ry="1.3" fill="#cfe4f7" stroke="#2f78c0"/><path d="M1.5 3 V9.3 H4.5 M1.5 5.5 H4.5" stroke="#555" fill="none"/></svg>
<div class="a" style="left:690px;top:528px;width:23px;height:23px;background:#f6f6f6;border:1px solid #0078d7;box-sizing:border-box"></div>
<svg class="a" style="left:695px;top:531px;" width="13" height="15" viewBox="0 0 13 15"><path d="M0.5 0.5 H8 L12.5 5 V14.5 H0.5Z" fill="#fff" stroke="#3a86c8"/><rect x="1.5" y="2" width="4" height="11" fill="#b9dbf2"/><path d="M8.5 1 V4 H11.5" stroke="#3a86c8" fill="none"/><path d="M7.5 14 V8 A1.5 1.5 0 0 1 10.5 8 V13" stroke="#333" stroke-width="1.2" fill="none"/></svg>
<div class="a" style="left:326px;top:553px;width:388px;height:262px;background:#fff;border:1px solid #828790;box-sizing:border-box"></div>
<div class="a" style="left:327px;top:554px;width:370px;height:260px;overflow:hidden">
<div class="a" style="left:25px;top:0px;width:1px;height:226px;background:repeating-linear-gradient(180deg,#222 0 1px,transparent 1px 2px)"></div>
<div class="a" style="left:31px;top:26px;width:20px;height:1px;background:repeating-linear-gradient(90deg,#222 0 1px,transparent 1px 2px)"></div>
<svg class="a" style="left:21px;top:22px;" width="9" height="9" viewBox="0 0 9 9"><rect x="0.5" y="0.5" width="8" height="8" fill="#fff" stroke="#7a7a7a"/><path d="M2 4.5 H7 M4.5 2 V7" stroke="#000"/></svg>
<svg class="a" style="left:52.8px;top:2px;" width="46" height="48" viewBox="0 0 46 48"><rect x="0.5" y="1.5" width="30" height="34" fill="#e6e6e6" stroke="#d2d2d2"/><rect x="5" y="5" width="21" height="28" fill="#cdcdcd"/><rect x="9.5" y="10.5" width="30" height="33" fill="#e8e8e8" stroke="#cfcfcf"/><rect x="14" y="13" width="21" height="12" fill="#c9c9c9"/><rect x="14" y="27" width="21" height="6" fill="#cbcbcb"/><rect x="14" y="36" width="16" height="5" fill="#cdcdcd"/><path d="M30.5 30.5 H40 L44.5 35 V45.5 H30.5Z" fill="#f2f2f2" stroke="#d8d8d8"/><rect x="28" y="32" width="10" height="4" fill="#e5200e"/><path d="M34 36 Q33 41 30 43 M33.5 39 Q36 41 39 41" stroke="#e5200e" stroke-width="1.1" fill="none"/></svg>
<div class="t" style="left:99.40px;top:20.00px;font-size:12px;line-height:12px;transform:scaleX(0.9200);transform-origin:0 0;color:#000;">Envoy (3)</div>
<div class="t" style="left:99.40px;top:38.00px;font-size:12px;line-height:12px;transform:scaleX(0.9000);transform-origin:0 0;color:#222;">Envoy_SIV00004862.pdf</div>
<div class="a" style="left:31px;top:76px;width:20px;height:1px;background:repeating-linear-gradient(90deg,#222 0 1px,transparent 1px 2px)"></div>
<svg class="a" style="left:21px;top:72px;" width="9" height="9" viewBox="0 0 9 9"><rect x="0.5" y="0.5" width="8" height="8" fill="#fff" stroke="#7a7a7a"/><path d="M2 4.5 H7 M4.5 2 V7" stroke="#000"/></svg>
<svg class="a" style="left:52.8px;top:52px;" width="46" height="48" viewBox="0 0 46 48"><rect x="0.5" y="1.5" width="30" height="34" fill="#e6e6e6" stroke="#d2d2d2"/><rect x="5" y="5" width="21" height="28" fill="#cdcdcd"/><rect x="9.5" y="10.5" width="30" height="33" fill="#e8e8e8" stroke="#cfcfcf"/><rect x="14" y="13" width="21" height="12" fill="#c9c9c9"/><rect x="14" y="27" width="21" height="6" fill="#cbcbcb"/><rect x="14" y="36" width="16" height="5" fill="#cdcdcd"/><path d="M30.5 30.5 H40 L44.5 35 V45.5 H30.5Z" fill="#f2f2f2" stroke="#d8d8d8"/><rect x="28" y="32" width="10" height="4" fill="#e5200e"/><path d="M34 36 Q33 41 30 43 M33.5 39 Q36 41 39 41" stroke="#e5200e" stroke-width="1.1" fill="none"/></svg>
<div class="t" style="left:99.40px;top:70.00px;font-size:12px;line-height:12px;transform:scaleX(0.9200);transform-origin:0 0;color:#000;">Nama (4)</div>
<div class="t" style="left:99.40px;top:88.00px;font-size:12px;line-height:12px;transform:scaleX(0.9000);transform-origin:0 0;color:#222;">Nama_#PBJ001.pdf</div>
<div class="a" style="left:31px;top:126px;width:20px;height:1px;background:repeating-linear-gradient(90deg,#222 0 1px,transparent 1px 2px)"></div>
<svg class="a" style="left:21px;top:122px;" width="9" height="9" viewBox="0 0 9 9"><rect x="0.5" y="0.5" width="8" height="8" fill="#fff" stroke="#7a7a7a"/><path d="M2 4.5 H7 M4.5 2 V7" stroke="#000"/></svg>
<svg class="a" style="left:52.8px;top:102px;" width="46" height="48" viewBox="0 0 46 48"><rect x="0.5" y="1.5" width="30" height="34" fill="#e6e6e6" stroke="#d2d2d2"/><rect x="5" y="5" width="21" height="28" fill="#cdcdcd"/><rect x="9.5" y="10.5" width="30" height="33" fill="#e8e8e8" stroke="#cfcfcf"/><rect x="14" y="13" width="21" height="12" fill="#c9c9c9"/><rect x="14" y="27" width="21" height="6" fill="#cbcbcb"/><rect x="14" y="36" width="16" height="5" fill="#cdcdcd"/><path d="M30.5 30.5 H40 L44.5 35 V45.5 H30.5Z" fill="#f2f2f2" stroke="#d8d8d8"/><rect x="28" y="32" width="10" height="4" fill="#e5200e"/><path d="M34 36 Q33 41 30 43 M33.5 39 Q36 41 39 41" stroke="#e5200e" stroke-width="1.1" fill="none"/></svg>
<div class="a" style="left:97px;top:101.79999999999995px;width:117px;height:49px;background:#d3d3d3;outline:1px dotted #6b1f1f;outline-offset:-1px"></div>
<div class="t" style="left:99.40px;top:120.00px;font-size:12px;line-height:12px;transform:scaleX(0.9200);transform-origin:0 0;color:#000;">Factura (5)</div>
<div class="t" style="left:99.40px;top:138.00px;font-size:12px;line-height:12px;transform:scaleX(0.9000);transform-origin:0 0;color:#f2eda0;">Factura_IN165796.pdf</div>
<div class="a" style="left:31px;top:176px;width:20px;height:1px;background:repeating-linear-gradient(90deg,#222 0 1px,transparent 1px 2px)"></div>
<svg class="a" style="left:21px;top:172px;" width="9" height="9" viewBox="0 0 9 9"><rect x="0.5" y="0.5" width="8" height="8" fill="#fff" stroke="#7a7a7a"/><path d="M2 4.5 H7 M4.5 2 V7" stroke="#000"/></svg>
<svg class="a" style="left:52.8px;top:152px;" width="46" height="48" viewBox="0 0 46 48"><rect x="0.5" y="1.5" width="30" height="34" fill="#e6e6e6" stroke="#d2d2d2"/><rect x="5" y="5" width="21" height="28" fill="#cdcdcd"/><rect x="9.5" y="10.5" width="30" height="33" fill="#e8e8e8" stroke="#cfcfcf"/><rect x="14" y="13" width="21" height="12" fill="#c9c9c9"/><rect x="14" y="27" width="21" height="6" fill="#cbcbcb"/><rect x="14" y="36" width="16" height="5" fill="#cdcdcd"/><path d="M30.5 30.5 H40 L44.5 35 V45.5 H30.5Z" fill="#f2f2f2" stroke="#d8d8d8"/><rect x="28" y="32" width="10" height="4" fill="#e5200e"/><path d="M34 36 Q33 41 30 43 M33.5 39 Q36 41 39 41" stroke="#e5200e" stroke-width="1.1" fill="none"/></svg>
<div class="t" style="left:99.40px;top:170.00px;font-size:12px;line-height:12px;transform:scaleX(0.9200);transform-origin:0 0;color:#000;">Sonrasc (6)</div>
<div class="t" style="left:99.40px;top:188.00px;font-size:12px;line-height:12px;transform:scaleX(0.9000);transform-origin:0 0;color:#222;">Sonrasc_XJ13-540365.pdf</div>
<div class="a" style="left:31px;top:226px;width:20px;height:1px;background:repeating-linear-gradient(90deg,#222 0 1px,transparent 1px 2px)"></div>
<svg class="a" style="left:21px;top:222px;" width="9" height="9" viewBox="0 0 9 9"><rect x="0.5" y="0.5" width="8" height="8" fill="#fff" stroke="#7a7a7a"/><path d="M2 4.5 H7 M4.5 2 V7" stroke="#000"/></svg>
<svg class="a" style="left:52.8px;top:202px;" width="46" height="48" viewBox="0 0 46 48"><rect x="0.5" y="1.5" width="30" height="34" fill="#e6e6e6" stroke="#d2d2d2"/><rect x="5" y="5" width="21" height="28" fill="#cdcdcd"/><rect x="9.5" y="10.5" width="30" height="33" fill="#e8e8e8" stroke="#cfcfcf"/><rect x="14" y="13" width="21" height="12" fill="#c9c9c9"/><rect x="14" y="27" width="21" height="6" fill="#cbcbcb"/><rect x="14" y="36" width="16" height="5" fill="#cdcdcd"/><path d="M30.5 30.5 H40 L44.5 35 V45.5 H30.5Z" fill="#f2f2f2" stroke="#d8d8d8"/><rect x="28" y="32" width="10" height="4" fill="#e5200e"/><path d="M34 36 Q33 41 30 43 M33.5 39 Q36 41 39 41" stroke="#e5200e" stroke-width="1.1" fill="none"/></svg>
<div class="t" style="left:99.40px;top:220.00px;font-size:12px;line-height:12px;transform:scaleX(0.9200);transform-origin:0 0;color:#000;">Lasku (7)</div>
<div class="t" style="left:99.40px;top:238.00px;font-size:12px;line-height:12px;transform:scaleX(0.9000);transform-origin:0 0;color:#222;">Lasku_839446.pdf</div>
</div>
<div class="a" style="left:696px;top:554px;width:16px;height:260px;background:#f0f0f0"></div>
<div class="a" style="left:697px;top:656px;width:14px;height:140px;background:#cdcdcd"></div>
<svg class="a" style="left:699.5px;top:560px;" width="10" height="7" viewBox="0 0 10 7"><path d="M1.2 5.8 L5 2 L8.8 5.8" stroke="#555" stroke-width="2.1" fill="none"/></svg>
<svg class="a" style="left:699.5px;top:801px;" width="10" height="7" viewBox="0 0 10 7"><path d="M1.2 1.2 L5 5 L8.8 1.2" stroke="#555" stroke-width="2.1" fill="none"/></svg>
<div class="a" style="left:714px;top:98px;width:4px;height:716px;background:#dadada"></div>
<div class="a" style="left:718px;top:98px;width:718px;height:24px;background:linear-gradient(180deg,#fdfdfd,#f1f1f1)"></div>
<svg class="a" style="left:723px;top:102px;" width="12" height="15" viewBox="0 0 12 15"><path d="M1 1 V13 L4 10 L6.5 14.5 L8.5 13.5 L6.3 9.3 L10.5 9.3Z" fill="#cfd4da" stroke="#8d939a"/></svg>
<svg class="a" style="left:745px;top:101px;" width="15" height="17" viewBox="0 0 15 17"><path d="M3 9 V4 A1.2 1.2 0 0 1 5.4 4 V8 V2.5 A1.2 1.2 0 0 1 7.8 2.5 V8 V2 A1.2 1.2 0 0 1 10.2 2 V8 V3.5 A1.2 1.2 0 0 1 12.6 3.5 V11 Q12.6 16 8 16 Q4.5 16 2.5 12.5 L0.8 9.5 A1.2 1.2 0 0 1 2.8 8.5Z" fill="#f6c24a" stroke="#d08f1c"/></svg>
<div class="a" style="left:763px;top:99px;width:24px;height:22px;background:#eaf4fc;border:1px solid #1e88e5;box-sizing:border-box"></div>
<svg class="a" style="left:767px;top:103px;" width="17" height="15" viewBox="0 0 17 15"><rect x="0.5" y="0.5" width="13" height="11" fill="#dcdcdc" stroke="#555" stroke-dasharray="1 1"/><path d="M13 8 V15 M9.5 11.5 H16.5" stroke="#000" stroke-width="1.3"/></svg>
<svg class="a" style="left:790px;top:103px;" width="17" height="16" viewBox="0 0 17 16"><rect x="0.5" y="0.5" width="13" height="12" fill="none" stroke="#666" stroke-dasharray="1 1"/><circle cx="7" cy="6.5" r="4" fill="#bfe0f7" stroke="#6b8bb0"/><circle cx="13" cy="13" r="2" fill="#f3a51f"/></svg>
<svg class="a" style="left:813px;top:102px;" width="16" height="17" viewBox="0 0 16 17"><path d="M0.5 0.5 H8.5 L12.5 4.5 V15.5 H0.5Z" fill="#f7f7f7" stroke="#9a9a9a"/><circle cx="8" cy="10" r="3.8" fill="#cfe6f8" stroke="#5a7fa8"/><circle cx="13" cy="15" r="2" fill="#f3a51f"/></svg>
<div class="a" style="left:836px;top:104px;width:1px;height:14px;background:#c8c8c8"></div>
<svg class="a" style="left:842px;top:102px;" width="16" height="16" viewBox="0 0 16 16"><circle cx="7" cy="7" r="6" fill="#d8ecfb" stroke="#e0a21c" stroke-width="1.6"/><path d="M4 7 H10 M7 4 V10" stroke="#1d5fa8" stroke-width="1.5"/><circle cx="13.2" cy="13.2" r="2.3" fill="#f3a51f"/></svg>
<svg class="a" style="left:865px;top:102px;" width="16" height="16" viewBox="0 0 16 16"><circle cx="7" cy="7" r="6" fill="#d8ecfb" stroke="#e0a21c" stroke-width="1.6"/><path d="M4 7 H10" stroke="#1d5fa8" stroke-width="1.5"/><circle cx="13.2" cy="13.2" r="2.3" fill="#f3a51f"/></svg>
<svg class="a" style="left:888px;top:102px;" width="16" height="16" viewBox="0 0 16 16"><circle cx="7" cy="7" r="6" fill="#d8ecfb" stroke="#e0a21c" stroke-width="1.6"/><text x="7" y="10" font-size="8" font-family="Liberation Sans" font-weight="bold" fill="#1d5fa8" text-anchor="middle">1</text><circle cx="13.2" cy="13.2" r="2.3" fill="#f3a51f"/></svg>
<svg class="a" style="left:910px;top:102px;" width="16" height="16" viewBox="0 0 16 16"><circle cx="7" cy="7" r="6" fill="#d8ecfb" stroke="#e0a21c" stroke-width="1.6"/><path d="M7 2.5 V11.5 M2.5 7 H11.5" stroke="#1d5fa8" stroke-width="1.2"/><path d="M5.5 3.5 L7 2 L8.5 3.5 M5.5 10.5 L7 12 L8.5 10.5 M3.5 5.5 L2 7 L3.5 8.5 M10.5 5.5 L12 7 L10.5 8.5" stroke="#1d5fa8" fill="none"/><circle cx="13.2" cy="13.2" r="2.3" fill="#f3a51f"/></svg>
<svg class="a" style="left:933px;top:102px;" width="16" height="16" viewBox="0 0 16 16"><circle cx="7" cy="7" r="6" fill="#d8ecfb" stroke="#e0a21c" stroke-width="1.6"/><path d="M3 7 H11 M4.5 5.5 L3 7 L4.5 8.5 M9.5 5.5 L11 7 L9.5 8.5" stroke="#1d5fa8" stroke-width="1.2" fill="none"/><circle cx="13.2" cy="13.2" r="2.3" fill="#f3a51f"/></svg>
<svg class="a" style="left:956px;top:102px;" width="16" height="16" viewBox="0 0 16 16"><circle cx="7" cy="7" r="6" fill="#d8ecfb" stroke="#e0a21c" stroke-width="1.6"/><path d="M7 3 V11 M5.5 4.5 L7 3 L8.5 4.5 M5.5 9.5 L7 11 L8.5 9.5" stroke="#1d5fa8" stroke-width="1.2" fill="none"/><circle cx="13.2" cy="13.2" r="2.3" fill="#f3a51f"/></svg>
<div class="a" style="left:980px;top:104px;width:1px;height:14px;background:#c8c8c8"></div>
<svg class="a" style="left:986px;top:102px;" width="17" height="16" viewBox="0 0 17 16"><rect x="4.5" y="0.5" width="8" height="5" fill="#fff" stroke="#3a86c8"/><rect x="6" y="2" width="5" height="1.5" fill="#a9d3f5"/><rect x="0.5" y="4.5" width="16" height="8" rx="1" fill="#f4f4f4" stroke="#6b6b6b"/><rect x="2.5" y="6" width="12" height="4" fill="#8a8a8a"/><rect x="4.5" y="11.5" width="8" height="4" fill="#fff" stroke="#3a86c8"/></svg>
<svg class="a" style="left:1009px;top:102px;" width="16" height="16" viewBox="0 0 16 16"><rect x="0.5" y="0.5" width="15" height="15" rx="1.5" fill="#3a9ae0" stroke="#1f78c8"/><rect x="3" y="1.5" width="10" height="6" fill="#fff"/><path d="M4.5 3.5 H7 M8 3.5 H11 M4.5 5.5 H6 M7 5.5 H9 M10 5.5 H11" stroke="#555"/><rect x="5" y="10" width="6" height="5.5" fill="#f2f2f2"/><rect x="6" y="11" width="1.5" height="3" fill="#333"/></svg>
<svg class="a" style="left:1032px;top:102px;" width="16" height="16" viewBox="0 0 16 16"><path d="M1.5 5.5 L5.5 1.5 L8.5 4.5 L4.5 8.5Z" fill="#c9c9c9" stroke="#8a8a8a"/><path d="M10 1 A3.5 3.5 0 0 0 13 7 L15 5 A3.5 3.5 0 0 0 10 1Z" fill="#c9c9c9" stroke="#8a8a8a"/><path d="M5.5 7.5 L11.5 13.5" stroke="#2f94dc" stroke-width="3.6" stroke-linecap="round"/><path d="M10.5 7.5 L4 14" stroke="#2f94dc" stroke-width="3.6" stroke-linecap="round"/></svg>
<div class="a" style="left:1363px;top:99px;width:23px;height:22px;background:#eaf4fc;border:1px solid #1e88e5;box-sizing:border-box"></div>
<svg class="a" style="left:1366px;top:102px;" width="17" height="16" viewBox="0 0 17 16"><path d="M0.5 1.5 H3 L4 2.5 H8.5 V7.5 H0.5Z" fill="#f3c865" stroke="#d09a2e"/><rect x="9.5" y="0.5" width="5" height="6" fill="#fff" stroke="#888"/><rect x="4.5" y="7.5" width="5" height="6" fill="#fff" stroke="#888"/><rect x="9.5" y="9.5" width="5" height="6" fill="#fff" stroke="#888"/><path d="M2 8 V10.5 H4.5 M12 7 V9.5" stroke="#888" fill="none"/></svg>
<svg class="a" style="left:1389px;top:101px;" width="17" height="17" viewBox="0 0 17 17"><path d="M3.5 0.5 H12 L16 4.5 V16.5 H3.5Z" fill="#f5f5f5" stroke="#bbb"/><rect x="0" y="3" width="10" height="5" fill="#e0241b"/><path d="M8 8 L5 14 M8 8 L12 13 M4 12 L13 12" stroke="#e0241b" stroke-width="1.2"/></svg>
<svg class="a" style="left:1413px;top:101px;" width="14" height="17" viewBox="0 0 14 17"><path d="M0.5 0.5 H9 L13.5 5 V16.5 H0.5Z" fill="#f8f8f8" stroke="#888"/><path d="M3 5 H10 M3 7.5 H11 M3 10 H11 M3 12.5 H11 M3 15 H9" stroke="#888"/></svg>
<div class="a" style="left:718px;top:122px;width:718px;height:366px;background:#fff"></div>
<div class="a" style="left:752px;top:122px;width:2px;height:366px;background:#4a4a4a"></div>
<div class="a" style="left:1379px;top:122px;width:2px;height:366px;background:#4a4a4a"></div>
<div class="a" style="left:1416px;top:122px;width:17px;height:366px;background:#f0f0f0"></div>
<div class="a" style="left:1417px;top:203px;width:15px;height:134px;background:#cdcdcd"></div>
<svg class="a" style="left:1419.5px;top:128px;" width="10" height="7" viewBox="0 0 10 7"><path d="M1.2 5.8 L5 2 L8.8 5.8" stroke="#555" stroke-width="2.1" fill="none"/></svg>
<svg class="a" style="left:1419.5px;top:475px;" width="10" height="7" viewBox="0 0 10 7"><path d="M1.2 1.2 L5 5 L8.8 1.2" stroke="#555" stroke-width="2.1" fill="none"/></svg>
<div class="a" style="left:1432px;top:51px;width:6px;height:771px;background:#f0f0f0"></div>
<div class="a" style="left:1432px;top:73px;width:1px;height:464px;background:#d0d0d0"></div>
<div class="a" style="left:1434px;top:51px;width:1px;height:771px;background:#fafafa"></div>
<div class="t" style="left:820.00px;top:143.00px;font-size:8px;line-height:8px;font-weight:bold;color:#111;-webkit-text-stroke:0">Sold To:</div>
<div class="t" style="left:820.00px;top:167.00px;font-size:8px;line-height:8px;color:#2a2a2a;-webkit-text-stroke:0">Business Imaging Systems, Inc.</div>
<div class="t" style="left:820.00px;top:178.00px;font-size:8px;line-height:8px;color:#2a2a2a;-webkit-text-stroke:0">Attn: Accountants Payable</div>
<div class="t" style="left:820.00px;top:190.00px;font-size:8px;line-height:8px;color:#2a2a2a;-webkit-text-stroke:0">13900 N. Harvey Ave.</div>
<div class="t" style="left:820.00px;top:201.00px;font-size:8px;line-height:8px;color:#2a2a2a;-webkit-text-stroke:0">Edmond, OK 73013</div>
<div class="t" style="left:1138.00px;top:143.00px;font-size:8px;line-height:8px;font-weight:bold;color:#111;-webkit-text-stroke:0">Ship To:</div>
<div class="t" style="left:1138.00px;top:168.00px;font-size:8px;line-height:8px;color:#2a2a2a;-webkit-text-stroke:0">Hand, Inc</div>
<div class="t" style="left:1138.00px;top:179.00px;font-size:8px;line-height:8px;color:#2a2a2a;-webkit-text-stroke:0">Attn: Helyn Bozoum</div>
<div class="t" style="left:1138.00px;top:190.00px;font-size:8px;line-height:8px;color:#2a2a2a;-webkit-text-stroke:0">98 Lein Hill</div>
<div class="t" style="left:1138.00px;top:201.00px;font-size:8px;line-height:8px;color:#2a2a2a;-webkit-text-stroke:0">Tulsa, OK 74135</div>
<div class="a" style="left:767px;top:232px;width:600px;height:35px;border:1px solid #3a3a3a;box-sizing:border-box"></div>
<div class="a" style="left:914px;top:232px;width:1px;height:35px;background:#3a3a3a"></div>
<div class="a" style="left:983px;top:232px;width:1px;height:35px;background:#3a3a3a"></div>
<div class="a" style="left:1060px;top:232px;width:1px;height:35px;background:#3a3a3a"></div>
<div class="a" style="left:1137px;top:232px;width:1px;height:35px;background:#3a3a3a"></div>
<div class="a" style="left:1265px;top:232px;width:1px;height:35px;background:#3a3a3a"></div>
<div class="a" style="left:1321px;top:232px;width:1px;height:35px;background:#3a3a3a"></div>
<div class="t" style="left:818.75px;top:238.00px;font-size:8px;line-height:8px;font-weight:bold;color:#111;-webkit-text-stroke:0">PO Number</div>
<div class="t" style="left:821.62px;top:255.00px;font-size:8px;line-height:8px;color:#2a2a2a;-webkit-text-stroke:0">PO009845</div>
<div class="t" style="left:928.08px;top:238.00px;font-size:8px;line-height:8px;font-weight:bold;color:#111;-webkit-text-stroke:0">Order Date</div>
<div class="t" style="left:928.73px;top:255.00px;font-size:8px;line-height:8px;color:#2a2a2a;-webkit-text-stroke:0">02/27/2014</div>
<div class="t" style="left:995.27px;top:238.00px;font-size:8px;line-height:8px;font-weight:bold;color:#111;-webkit-text-stroke:0">Customer No.</div>
<div class="t" style="left:1008.38px;top:255.00px;font-size:8px;line-height:8px;color:#2a2a2a;-webkit-text-stroke:0">BIS002</div>
<div class="t" style="left:1074.96px;top:238.00px;font-size:8px;line-height:8px;font-weight:bold;color:#111;-webkit-text-stroke:0">Salesperson</div>
<div class="t" style="left:1080.82px;top:255.00px;font-size:8px;line-height:8px;color:#2a2a2a;-webkit-text-stroke:0">DVINTON</div>
<div class="t" style="left:1182.80px;top:238.00px;font-size:8px;line-height:8px;font-weight:bold;color:#111;-webkit-text-stroke:0">Order No.</div>
<div class="t" style="left:1185.68px;top:255.00px;font-size:8px;line-height:8px;color:#2a2a2a;-webkit-text-stroke:0">1404555</div>
<div class="t" style="left:1277.54px;top:238.00px;font-size:8px;line-height:8px;font-weight:bold;color:#111;-webkit-text-stroke:0">Ship Via</div>
<div class="t" style="left:1275.47px;top:255.00px;font-size:8px;line-height:8px;color:#2a2a2a;-webkit-text-stroke:0">GROUND</div>
<div class="t" style="left:1332.54px;top:238.00px;font-size:8px;line-height:8px;font-weight:bold;color:#111;-webkit-text-stroke:0">Terms</div>
<div class="t" style="left:1336.91px;top:255.00px;font-size:8px;line-height:8px;color:#2a2a2a;-webkit-text-stroke:0">N30</div>
<div class="a" style="left:817px;top:281px;width:537px;height:33px;background:#efec1c"></div>
<div class="a" style="left:825px;top:286px;width:521px;height:22px;background:#98d80e;border:1px solid #3a5a10;box-sizing:border-box"></div>
<div class="a" style="left:767px;top:278px;width:600px;height:211px;border:1px solid #3a3a3a;border-bottom:none;box-sizing:border-box"></div>
<div class="a" style="left:767px;top:308px;width:600px;height:1px;background:#222"></div>
<div class="a" style="left:813px;top:278px;width:1px;height:211px;background:#3a3a3a"></div>
<div class="a" style="left:854px;top:278px;width:1px;height:211px;background:#3a3a3a"></div>
<div class="a" style="left:977px;top:278px;width:1px;height:211px;background:#3a3a3a"></div>
<div class="a" style="left:1198px;top:278px;width:1px;height:211px;background:#3a3a3a"></div>
<div class="a" style="left:1266px;top:278px;width:1px;height:211px;background:#3a3a3a"></div>
<div class="t" style="left:783.33px;top:288.00px;font-size:8px;line-height:8px;font-weight:bold;color:#111;-webkit-text-stroke:0">Qty</div>
<div class="t" style="left:781.78px;top:298.00px;font-size:8px;line-height:8px;font-weight:bold;color:#111;-webkit-text-stroke:0">Ord.</div>
<div class="t" style="left:826.00px;top:288.00px;font-size:8px;line-height:8px;font-weight:bold;color:#1d4a00;-webkit-text-stroke:0">Qty</div>
<div class="t" style="left:826.00px;top:298.00px;font-size:8px;line-height:8px;font-weight:bold;color:#1d4a00;-webkit-text-stroke:0">Shp.</div>
<div class="t" style="left:891.05px;top:288.00px;font-size:8px;line-height:8px;font-weight:bold;color:#1d4a00;-webkit-text-stroke:0">Item Number</div>
<div class="t" style="left:1065.50px;top:288.00px;font-size:8px;line-height:8px;font-weight:bold;color:#1d4a00;-webkit-text-stroke:0">Description</div>
<div class="t" style="left:1213.33px;top:288.00px;font-size:8px;line-height:8px;font-weight:bold;color:#1d4a00;-webkit-text-stroke:0">Unit Price</div>
<div class="t" style="left:1287.10px;top:288.00px;font-size:8px;line-height:8px;font-weight:bold;color:#1d4a00;-webkit-text-stroke:0">Extended Price</div>
<div class="t" style="left:773.50px;top:318.00px;font-size:8px;line-height:8px;color:#2a2a2a;-webkit-text-stroke:0">2.00</div>
<div class="t" style="left:819.50px;top:318.00px;font-size:8px;line-height:8px;color:#2a2a2a;-webkit-text-stroke:0">2.00</div>
<div class="t" style="left:860.90px;top:318.00px;font-size:8px;line-height:8px;color:#2a2a2a;-webkit-text-stroke:0">CS220</div>
<div class="t" style="left:983.70px;top:318.00px;font-size:8px;line-height:8px;color:#2a2a2a;-webkit-text-stroke:0">Raw:  12TB / Usable (50% comp): 16TiB; Dual Cont.</div>
<div class="t" style="left:1224.11px;top:318.00px;font-size:8px;line-height:8px;color:#2a2a2a;-webkit-text-stroke:0">20,350.00</div>
<div class="t" style="left:1324.01px;top:318.00px;font-size:8px;line-height:8px;color:#2a2a2a;-webkit-text-stroke:0">40,700.00</div>
<div class="t" style="left:773.50px;top:347.00px;font-size:8px;line-height:8px;color:#2a2a2a;-webkit-text-stroke:0">4.00</div>
<div class="t" style="left:819.50px;top:347.00px;font-size:8px;line-height:8px;color:#2a2a2a;-webkit-text-stroke:0">4.00</div>
<div class="t" style="left:860.90px;top:347.00px;font-size:8px;line-height:8px;color:#2a2a2a;-webkit-text-stroke:0">SP-PCORD-US</div>
<div class="t" style="left:983.70px;top:347.00px;font-size:8px;line-height:8px;color:#2a2a2a;-webkit-text-stroke:0">US Power Cord</div>
<div class="t" style="left:1259.70px;top:347.00px;font-size:8px;line-height:8px;color:#2a2a2a;-webkit-text-stroke:0"></div>
<div class="t" style="left:1344.03px;top:347.00px;font-size:8px;line-height:8px;color:#2a2a2a;-webkit-text-stroke:0">0.00</div>
<div class="t" style="left:773.50px;top:370.00px;font-size:8px;line-height:8px;color:#2a2a2a;-webkit-text-stroke:0">2.00</div>
<div class="t" style="left:819.50px;top:370.00px;font-size:8px;line-height:8px;color:#2a2a2a;-webkit-text-stroke:0">2.00</div>
<div class="t" style="left:860.90px;top:370.00px;font-size:8px;line-height:8px;color:#2a2a2a;-webkit-text-stroke:0">SLA-CS220-NBD-3YR</div>
<div class="t" style="left:983.70px;top:370.00px;font-size:8px;line-height:8px;color:#2a2a2a;-webkit-text-stroke:0">NBD Service and Software Support for CS220, 24x7, 3</div>
<div class="t" style="left:1228.56px;top:370.00px;font-size:8px;line-height:8px;color:#2a2a2a;-webkit-text-stroke:0">6,872.00</div>
<div class="t" style="left:1324.01px;top:370.00px;font-size:8px;line-height:8px;color:#2a2a2a;-webkit-text-stroke:0">13,744.00</div>
<div class="t" style="left:773.50px;top:398.00px;font-size:8px;line-height:8px;color:#2a2a2a;-webkit-text-stroke:0"></div>
<div class="t" style="left:819.50px;top:398.00px;font-size:8px;line-height:8px;color:#2a2a2a;-webkit-text-stroke:0"></div>
<div class="t" style="left:860.90px;top:398.00px;font-size:8px;line-height:8px;color:#2a2a2a;-webkit-text-stroke:0">SHIP</div>
<div class="t" style="left:983.70px;top:398.00px;font-size:8px;line-height:8px;color:#2a2a2a;-webkit-text-stroke:0">Shipping</div>
<div class="t" style="left:1235.23px;top:398.00px;font-size:8px;line-height:8px;color:#2a2a2a;-webkit-text-stroke:0">150.00</div>
<div class="t" style="left:1335.13px;top:398.00px;font-size:8px;line-height:8px;color:#2a2a2a;-webkit-text-stroke:0">150.00</div>
<div class="t" style="left:983.70px;top:329.00px;font-size:8px;line-height:8px;color:#2a2a2a;-webkit-text-stroke:0">2xHex GigE</div>
<div class="t" style="left:983.70px;top:380.00px;font-size:8px;line-height:8px;color:#2a2a2a;-webkit-text-stroke:0">Yrs</div>
<div class="t" style="left:999.70px;top:422.00px;font-size:8px;line-height:8px;font-weight:bold;color:#111;-webkit-text-stroke:0">Due Date</div>
<div class="a" style="left:993px;top:436px;width:92px;height:2px;background:#777"></div>
<div class="t" style="left:1000.00px;top:446.00px;font-size:8px;line-height:8px;color:#2a2a2a;-webkit-text-stroke:0">03/28/2014</div>
<div class="t" style="left:1107.50px;top:422.00px;font-size:8px;line-height:8px;font-weight:bold;color:#111;-webkit-text-stroke:0">Amount Due</div>
<div class="a" style="left:1101px;top:436px;width:82px;height:2px;background:#777"></div>
<div class="t" style="left:1107.00px;top:446.00px;font-size:8px;line-height:8px;color:#2a2a2a;-webkit-text-stroke:0">54,594.00</div>
<div class="a" style="left:718px;top:488px;width:714px;height:24px;background:#ededed"></div>
<svg class="a" style="left:720px;top:490px;" width="17" height="17" viewBox="0 0 17 17"><path d="M3.5 0.5 H12 L16 4.5 V16.5 H3.5Z" fill="#f5f5f5" stroke="#bbb"/><rect x="0" y="3" width="10" height="5" fill="#e0241b"/><path d="M8 8 L5 14 M8 8 L12 13 M4 12 L13 12" stroke="#e0241b" stroke-width="1.2"/></svg>
<div class="t" style="left:739.60px;top:495.00px;font-size:12px;line-height:12px;transform:scaleX(0.9716);transform-origin:0 0;color:#000;">PDF Document</div>
<div class="a" style="left:827px;top:492px;width:1px;height:16px;background:#c8c8c8"></div>
<div class="t" style="left:833.40px;top:495.00px;font-size:12px;line-height:12px;transform:scaleX(0.8959);transform-origin:0 0;color:#000;">Scale 41%</div>
<div class="a" style="left:893px;top:492px;width:1px;height:16px;background:#c8c8c8"></div>
<div class="t" style="left:900.00px;top:495.00px;font-size:12px;line-height:12px;transform:scaleX(0.9446);transform-origin:0 0;color:#000;">8.50&quot; x 11.00&quot;</div>
<div class="a" style="left:978px;top:492px;width:1px;height:16px;background:#c8c8c8"></div>
<div class="t" style="left:985.60px;top:495.00px;font-size:12px;line-height:12px;letter-spacing:-0.015px;color:#000;">Black &amp; White</div>
<div class="a" style="left:718px;top:512px;width:714px;height:25px;background:linear-gradient(180deg,#fafafa,#efefef)"></div>
<svg class="a" style="left:721px;top:516px;" width="16" height="16" viewBox="0 0 16 16"><rect x="0.5" y="0.5" width="15" height="15" fill="#cfcfcf" stroke="#c2c2c2"/><path d="M5 12 V7 Q4 4 7 3 Q10 3 9 7 V12" fill="#dedede"/><rect x="1" y="11" width="14" height="4" fill="#c4c4c4"/></svg>
<svg class="a" style="left:744px;top:516px;" width="16" height="16" viewBox="0 0 16 16"><rect x="0.5" y="0.5" width="15" height="15" fill="#d2d2d2" stroke="#c2c2c2"/><path d="M5 12 V7 Q5 3 9 3 Q12 4 10 8 V12" fill="#bdbdbd"/><rect x="1" y="11" width="14" height="1" fill="#f2f2f2"/><rect x="1" y="12" width="14" height="3" fill="#cacaca"/></svg>
<svg class="a" style="left:767px;top:516px;" width="16" height="16" viewBox="0 0 16 16"><rect x="0.5" y="0.5" width="15" height="15" fill="#efefef" stroke="#bdbdbd"/><circle cx="6" cy="6" r="4" fill="#cfcfcf" stroke="#a8a8a8" stroke-dasharray="1 1"/><path d="M5 10 V12 M7 10 V12" stroke="#999"/><path d="M1 12.5 H15" stroke="#aaa"/></svg>
<svg class="a" style="left:790px;top:516px;" width="16" height="16" viewBox="0 0 16 16"><rect x="0.5" y="0.5" width="15" height="15" fill="#f0f0f0" stroke="#bdbdbd"/><path d="M2 11 L5 8 L8 9 L11 5 L14 4 V11Z" fill="#b8b8b8"/><rect x="2" y="12" width="12" height="2" fill="#9a9a9a"/></svg>
<svg class="a" style="left:813px;top:516px;" width="16" height="16" viewBox="0 0 16 16"><path d="M2.5 2.5 L13.5 13.5 M13.5 2.5 L2.5 13.5" stroke="#a9a9a9" stroke-width="4.2"/><path d="M2.5 2.5 L13.5 13.5 M13.5 2.5 L2.5 13.5" stroke="#cdcdcd" stroke-width="2.2"/></svg>
<div class="a" style="left:836px;top:517px;width:1px;height:14px;background:#c8c8c8"></div>
<svg class="a" style="left:843px;top:516px;" width="16" height="16" viewBox="0 0 16 16"><path d="M12.5 4.5 A5.8 5.8 0 1 0 13.5 10" stroke="#5aa515" stroke-width="3.4" fill="none"/><path d="M12.5 4.5 A5.8 5.8 0 1 0 13.5 10" stroke="#9ddc3a" stroke-width="1.4" fill="none"/><path d="M10 10 L16 9 L14 15Z" fill="#5aa515"/></svg>
<svg class="a" style="left:865px;top:516px;" width="16" height="16" viewBox="0 0 16 16"><path d="M3.5 11.5 A5.8 5.8 0 1 1 12.5 8" stroke="#5aa515" stroke-width="3.4" fill="none"/><path d="M3.5 11.5 A5.8 5.8 0 1 1 12.5 8" stroke="#9ddc3a" stroke-width="1.4" fill="none"/><path d="M0 10 L7 9 L4 15Z" fill="#5aa515"/></svg>
<div class="a" style="left:888px;top:517px;width:1px;height:14px;background:#c8c8c8"></div>
<svg class="a" style="left:895px;top:516px;" width="14" height="16" viewBox="0 0 14 16"><rect x="0.5" y="0.5" width="12" height="15" fill="#e6e6e6" stroke="#c4c4c4"/><path d="M3.5 7 A3.3 3.3 0 0 1 9.5 5.5 M9.5 9 A3.3 3.3 0 0 1 3.5 10.5" stroke="#b5b5b5" stroke-width="1.6" fill="none"/></svg>
<svg class="a" style="left:917px;top:516px;" width="16" height="16" viewBox="0 0 16 16"><circle cx="8" cy="8" r="7.3" fill="#dcdcdc" stroke="#c8c8c8"/><path d="M13.2 2.8 A7.3 7.3 0 0 1 2.8 13.2Z" fill="#b0b0b0"/></svg>
<svg class="a" style="left:940px;top:516px;" width="16" height="16" viewBox="0 0 16 16"><path d="M4 0 V12 H16 M0 4 H12 V16" stroke="#a8a8a8" stroke-width="2.4" fill="none"/><path d="M5 11 L11 5 M12 4 L15 1" stroke="#b5b5b5"/></svg>
<svg class="a" style="left:963px;top:516px;" width="16" height="16" viewBox="0 0 16 16"><rect x="0.5" y="0.5" width="9" height="12" fill="#ececec" stroke="#d0d0d0"/><rect x="5" y="3" width="10.5" height="12.5" fill="#bcbcbc"/><path d="M7 6 H14 M7 8.5 H14 M7 11 H14 M7 13.5 H14" stroke="#eaeaea"/><path d="M2 4 H5 M2 6.5 H5 M2 9 H5" stroke="#c0c0c0"/></svg>
<svg class="a" style="left:986px;top:516px;" width="15" height="16" viewBox="0 0 15 16"><rect x="1" y="1" width="13" height="14" rx="1.5" fill="#ebebeb" stroke="#a9a9a9" stroke-width="1.6"/><path d="M2 13 Q5 12 7 8 T13 3" stroke="#999" stroke-width="1.4" fill="none"/></svg>
<svg class="a" style="left:1008px;top:516px;" width="17" height="16" viewBox="0 0 17 16"><path d="M5 9 Q8 4 12 6 Q15 8 13 13" stroke="#cbcbcb" stroke-width="3.2" fill="none"/><path d="M0 6 L7 4 L5 12Z" fill="#cbcbcb"/></svg>
<div class="a" style="left:718px;top:537px;width:714px;height:4px;background:#d9d9d9"></div>
<div class="a" style="left:718px;top:541px;width:715px;height:274px;background:#fff;border:1px solid #828790;box-sizing:border-box"></div>
<div class="a" style="left:970px;top:567px;width:1px;height:230px;background:#f0f0f0"></div>
<div class="a" style="left:969px;top:543px;width:1px;height:23px;background:#e3e3e3"></div>
<div class="a" style="left:1050px;top:567px;width:1px;height:230px;background:#f0f0f0"></div>
<div class="a" style="left:1049px;top:543px;width:1px;height:23px;background:#e3e3e3"></div>
<div class="a" style="left:1110px;top:567px;width:1px;height:230px;background:#f0f0f0"></div>
<div class="a" style="left:1109px;top:543px;width:1px;height:23px;background:#e3e3e3"></div>
<div class="a" style="left:1170px;top:567px;width:1px;height:230px;background:#f0f0f0"></div>
<div class="a" style="left:1169px;top:543px;width:1px;height:23px;background:#e3e3e3"></div>
<div class="a" style="left:1230px;top:567px;width:1px;height:230px;background:#f0f0f0"></div>
<div class="a" style="left:1229px;top:543px;width:1px;height:23px;background:#e3e3e3"></div>
<div class="a" style="left:719px;top:583px;width:713px;height:1px;background:#f0f0f0"></div>
<div class="a" style="left:719px;top:600px;width:713px;height:1px;background:#f0f0f0"></div>
<div class="a" style="left:719px;top:617px;width:713px;height:1px;background:#f0f0f0"></div>
<div class="a" style="left:719px;top:634px;width:713px;height:1px;background:#f0f0f0"></div>
<div class="a" style="left:719px;top:651px;width:713px;height:1px;background:#f0f0f0"></div>
<div class="a" style="left:719px;top:668px;width:713px;height:1px;background:#f0f0f0"></div>
<div class="a" style="left:719px;top:685px;width:713px;height:1px;background:#f0f0f0"></div>
<div class="a" style="left:719px;top:702px;width:713px;height:1px;background:#f0f0f0"></div>
<div class="a" style="left:719px;top:719px;width:713px;height:1px;background:#f0f0f0"></div>
<div class="a" style="left:719px;top:736px;width:713px;height:1px;background:#f0f0f0"></div>
<div class="a" style="left:719px;top:753px;width:713px;height:1px;background:#f0f0f0"></div>
<div class="a" style="left:719px;top:770px;width:713px;height:1px;background:#f0f0f0"></div>
<div class="a" style="left:719px;top:787px;width:713px;height:1px;background:#f0f0f0"></div>
<div class="t" style="left:726.00px;top:549.00px;font-size:12px;line-height:12px;transform:scaleX(0.8800);transform-origin:0 0;color:#000;">Results (1)</div>
<div class="t" style="left:989.97px;top:549.00px;font-size:12px;line-height:12px;transform:scaleX(0.8800);transform-origin:0 0;color:#000;">Confidence</div>
<div class="t" style="left:1056.00px;top:549.00px;font-size:12px;line-height:12px;transform:scaleX(0.8800);transform-origin:0 0;color:#000;">Page No</div>
<div class="t" style="left:1137.67px;top:549.00px;font-size:12px;line-height:12px;transform:scaleX(0.8800);transform-origin:0 0;color:#000;">Index</div>
<div class="t" style="left:1191.30px;top:549.00px;font-size:12px;line-height:12px;transform:scaleX(0.8800);transform-origin:0 0;color:#000;">Length</div>
<div class="t" style="left:1236.30px;top:549.00px;font-size:12px;line-height:12px;transform:scaleX(0.8800);transform-origin:0 0;color:#000;">Extractor</div>
<div class="t" style="left:726.00px;top:570.00px;font-size:12px;line-height:12px;transform:scaleX(0.8786);transform-origin:0 0;color:#2010f8;">Qty Shp.Item NumberDescriptionUnit PriceExtend...</div>
<div class="t" style="left:1016.69px;top:570.00px;font-size:12px;line-height:12px;transform:scaleX(0.8800);transform-origin:0 0;color:#2010f8;">100%</div>
<div class="t" style="left:1056.00px;top:570.00px;font-size:12px;line-height:12px;color:#2010f8;">1</div>
<div class="t" style="left:1145.88px;top:570.00px;font-size:12px;line-height:12px;transform:scaleX(0.8800);transform-origin:0 0;color:#2010f8;">482</div>
<div class="t" style="left:1211.85px;top:570.00px;font-size:12px;line-height:12px;transform:scaleX(0.8800);transform-origin:0 0;color:#2010f8;">53</div>
<div class="t" style="left:1236.30px;top:570.00px;font-size:12px;line-height:12px;transform:scaleX(0.8693);transform-origin:0 0;color:#2010f8;">TBL-HR - Line Items - Factura</div>
<div class="a" style="left:719px;top:797px;width:713px;height:16px;background:#f0f0f0"></div>
<div class="a" style="left:737px;top:797px;width:633px;height:15px;background:#cdcdcd"></div>
<svg class="a" style="left:725px;top:800px;" width="6" height="9" viewBox="0 0 6 9"><path d="M5 1 L1.5 4.5 L5 8" stroke="#606060" stroke-width="1.6" fill="none"/></svg>
<svg class="a" style="left:1419px;top:800px;" width="6" height="9" viewBox="0 0 6 9"><path d="M1 1 L4.5 4.5 L1 8" stroke="#606060" stroke-width="1.6" fill="none"/></svg>
<svg class="a" style="left:0;top:0" width="1440" height="824" viewBox="0 0 1440 824"><defs><filter id="sh" x="-20%" y="-50%" width="140%" height="200%"><feGaussianBlur in="SourceAlpha" stdDeviation="1.6"/><feOffset dx="2" dy="3" result="o"/><feComponentTransfer><feFuncA type="linear" slope="0.55"/></feComponentTransfer><feMerge><feMergeNode/><feMergeNode in="SourceGraphic"/></feMerge></filter></defs><g filter="url(#sh)"><path d="M286 154 L317 144.5 L317 151.0 L410 151.0 L410 157.0 L317 157.0 L317 163.5Z" fill="#f7941d"/><circle cx="410" cy="154" r="19.5" fill="#f7941d"/></g><path d="M407.8 144.3 H412.9 V162 H407.8 V149.4 L404.6 150.8 V146.4 Z" fill="#fff"/><g filter="url(#sh)"><path d="M817 294.8 L786 285.1 L786 292.3 L694 292.3 L694 297.3 L786 297.3 L786 304.5Z" fill="#f7941d"/><circle cx="694" cy="295" r="19.5" fill="#f7941d"/></g><text x="694" y="303.2" font-family="Liberation Sans" font-weight="bold" font-size="23" fill="#fff" stroke="#fff" stroke-width="0.9" text-anchor="middle">2</text><g filter="url(#sh)"><path d="M223 203 L254 193.25 L254 200.2 L347 200.2 L347 205.8 L254 205.8 L254 212.75Z" fill="#f7941d"/><circle cx="347" cy="203" r="19.5" fill="#f7941d"/></g><text x="347" y="211.2" font-family="Liberation Sans" font-weight="bold" font-size="23" fill="#fff" stroke="#fff" stroke-width="0.9" text-anchor="middle">3</text><g filter="url(#sh)"><path d="M204.4 364 L236 354.3 L236 361.5 L329 361.5 L329 366.5 L236 366.5 L236 373.7Z" fill="#f7941d"/><circle cx="329" cy="364" r="19.5" fill="#f7941d"/></g><text x="329" y="372.2" font-family="Liberation Sans" font-weight="bold" font-size="23" fill="#fff" stroke="#fff" stroke-width="0.9" text-anchor="middle">4</text></svg>
</body></html>
